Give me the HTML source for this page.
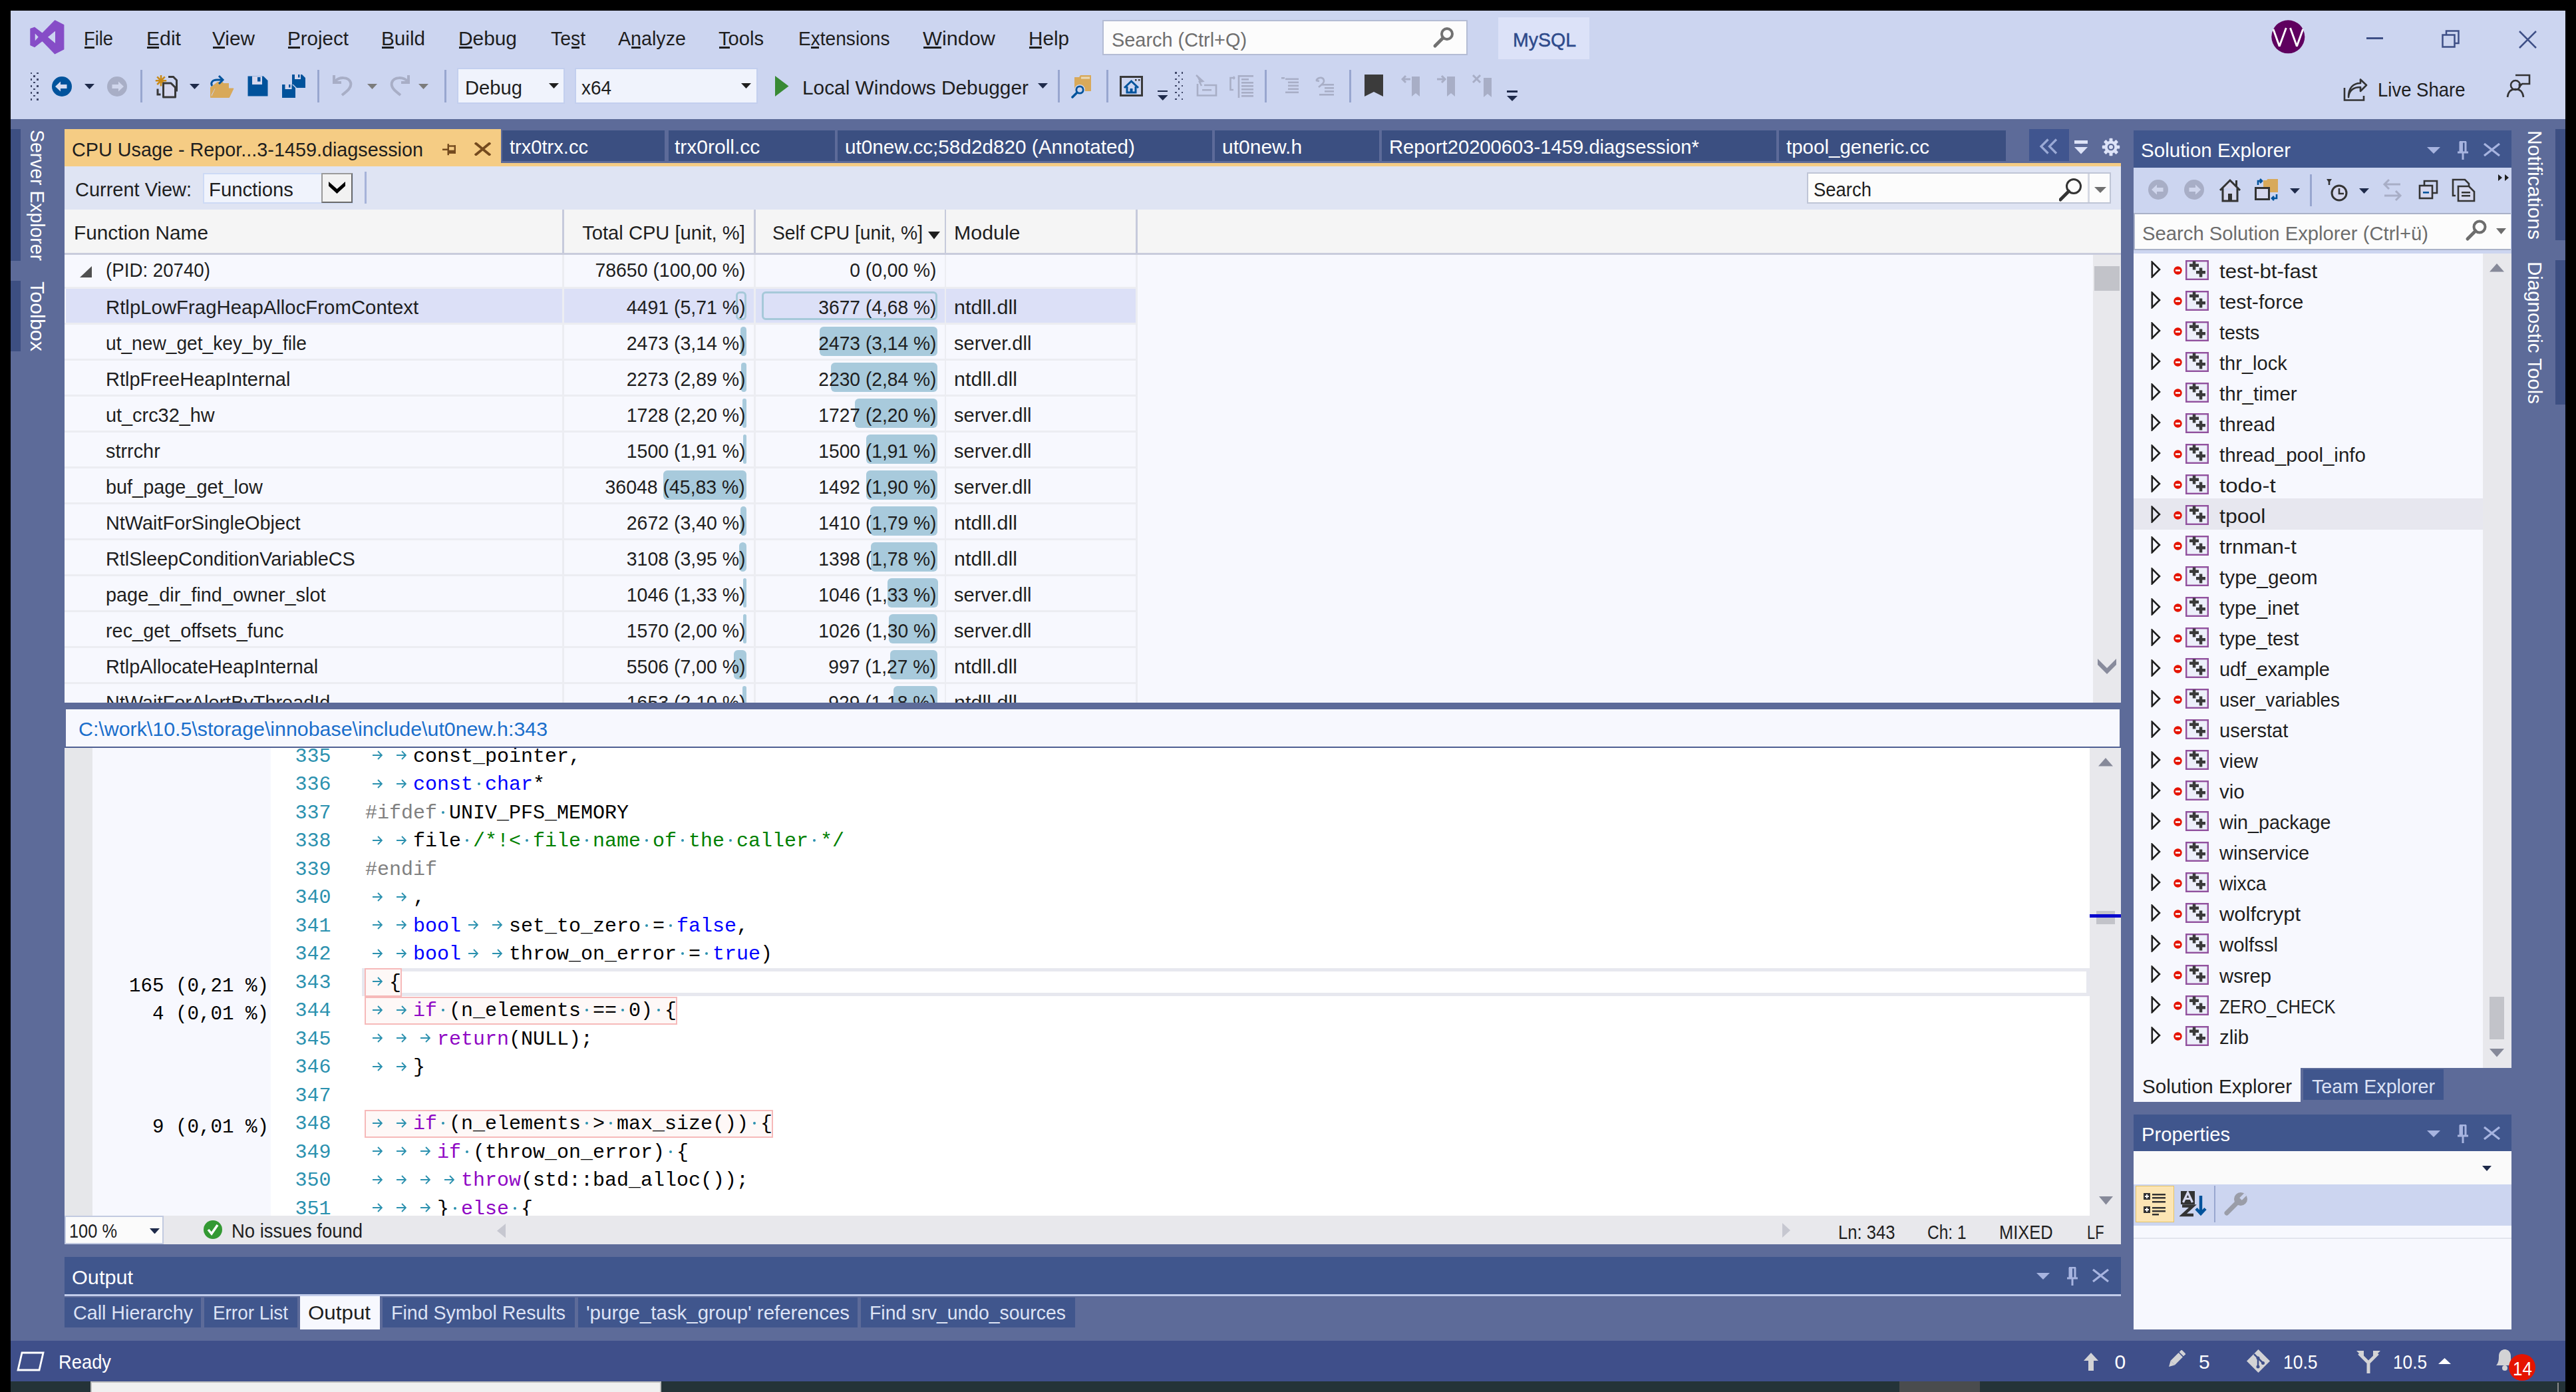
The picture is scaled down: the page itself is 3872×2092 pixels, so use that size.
<!DOCTYPE html>
<html><head><meta charset="utf-8"><style>
html,body{margin:0;padding:0;}
body{width:3872px;height:2092px;background:#000;position:relative;overflow:hidden;font-family:"Liberation Sans",sans-serif;}
div,svg{position:absolute;box-sizing:border-box;}
</style></head><body>
<div style="left:16px;top:16px;width:3840px;height:2060px;background:#5D6B99;"></div><div style="left:16px;top:16px;width:3840px;height:163px;background:#CCD5F0;"></div><svg style="left:36px;top:24px;" width="70" height="64" viewBox="0 0 70 64"><path d="M46.5 6.9 L59.8 13.5 L59.8 50 L46.5 56.8 L27.6 37.3 L15.9 46.5 L9.9 43.7 L9.9 19.3 L15.9 17.2 L27.6 26.2 Z M47.6 21.4 L35 31.7 L47.6 42.1 Z M16.1 24.8 L22.5 31.7 L16.1 38.9 Z" fill="#864DC7" stroke="#864DC7" stroke-width="1.2" stroke-linejoin="round" fill-rule="evenodd"/></svg><div style="left:126.00px;top:43px;font:30px/30px 'Liberation Sans',sans-serif;color:#1E1E1E;white-space:pre;transform:scaleX(0.9099);transform-origin:left top;">File</div><div style="left:127px;top:70px;width:14.6759px;height:2.5px;background:#1E1E1E;"></div><div style="left:220.00px;top:43px;font:30px/30px 'Liberation Sans',sans-serif;color:#1E1E1E;white-space:pre;transform:scaleX(1.0057);transform-origin:left top;">Edit</div><div style="left:221px;top:70px;width:18.1306px;height:2.5px;background:#1E1E1E;"></div><div style="left:319.00px;top:43px;font:30px/30px 'Liberation Sans',sans-serif;color:#1E1E1E;white-space:pre;transform:scaleX(0.9922);transform-origin:left top;">View</div><div style="left:320px;top:70px;width:17.8605px;height:2.5px;background:#1E1E1E;"></div><div style="left:432.00px;top:43px;font:30px/30px 'Liberation Sans',sans-serif;color:#1E1E1E;white-space:pre;transform:scaleX(0.9853);transform-origin:left top;">Project</div><div style="left:433px;top:70px;width:17.7209px;height:2.5px;background:#1E1E1E;"></div><div style="left:573.00px;top:43px;font:30px/30px 'Liberation Sans',sans-serif;color:#1E1E1E;white-space:pre;transform:scaleX(0.9890);transform-origin:left top;">Build</div><div style="left:574px;top:70px;width:17.7954px;height:2.5px;background:#1E1E1E;"></div><div style="left:689.00px;top:43px;font:30px/30px 'Liberation Sans',sans-serif;color:#1E1E1E;white-space:pre;transform:scaleX(0.9952);transform-origin:left top;">Debug</div><div style="left:690px;top:70px;width:19.5685px;height:2.5px;background:#1E1E1E;"></div><div style="left:828.00px;top:43px;font:30px/30px 'Liberation Sans',sans-serif;color:#1E1E1E;white-space:pre;transform:scaleX(0.9452);transform-origin:left top;">Test</div><div style="left:858.951px;top:70px;width:12.1778px;height:2.5px;background:#1E1E1E;"></div><div style="left:929.00px;top:43px;font:30px/30px 'Liberation Sans',sans-serif;color:#1E1E1E;white-space:pre;transform:scaleX(0.9555);transform-origin:left top;">Analyze</div><div style="left:949.125px;top:70px;width:13.945px;height:2.5px;background:#1E1E1E;"></div><div style="left:1080.00px;top:43px;font:30px/30px 'Liberation Sans',sans-serif;color:#1E1E1E;white-space:pre;transform:scaleX(0.9708);transform-origin:left top;">Tools</div><div style="left:1081px;top:70px;width:15.7925px;height:2.5px;background:#1E1E1E;"></div><div style="left:1199.50px;top:43px;font:30px/30px 'Liberation Sans',sans-serif;color:#1E1E1E;white-space:pre;transform:scaleX(0.9369);transform-origin:left top;">Extensions</div><div style="left:1219.25px;top:70px;width:12.053px;height:2.5px;background:#1E1E1E;"></div><div style="left:1387.00px;top:43px;font:30px/30px 'Liberation Sans',sans-serif;color:#1E1E1E;white-space:pre;transform:scaleX(1.0214);transform-origin:left top;">Window</div><div style="left:1388px;top:70px;width:26.9177px;height:2.5px;background:#1E1E1E;"></div><div style="left:1546.00px;top:43px;font:30px/30px 'Liberation Sans',sans-serif;color:#1E1E1E;white-space:pre;transform:scaleX(0.9884);transform-origin:left top;">Help</div><div style="left:1547px;top:70px;width:19.4195px;height:2.5px;background:#1E1E1E;"></div><div style="left:1657px;top:30px;width:549px;height:53px;background:#FCFCFC;border:2px solid #B4BCD4;"></div><div style="left:1671.00px;top:45px;font:30px/30px 'Liberation Sans',sans-serif;color:#6F6F6F;white-space:pre;transform:scaleX(0.9627);transform-origin:left top;">Search (Ctrl+Q)</div><svg style="left:2153px;top:38px;" width="36" height="36" viewBox="0 0 36 36"><circle cx="22" cy="13" r="8" fill="none" stroke="#717171" stroke-width="4"/><path d="M16 19 L4 31" stroke="#717171" stroke-width="5" stroke-linecap="round"/></svg><div style="left:2252px;top:26px;width:137px;height:63px;background:#DCE2F8;"></div><div style="left:2274.00px;top:45px;font:30px/30px 'Liberation Sans',sans-serif;color:#2E4A8B;white-space:pre;transform:scaleX(0.9499);transform-origin:left top;-webkit-text-stroke:0.5px #2E4A8B;">MySQL</div><svg style="left:3414px;top:30px;" width="51" height="51" viewBox="0 0 51 51"><circle cx="25.3" cy="25.3" r="25" fill="#5F005F"/><path d="M3.04 13.92 L12.2 39.6 L22.3 12 M28.5 12 L38.4 39.6 L47.56 13.92" fill="none" stroke="#fff" stroke-width="2.9" stroke-linejoin="bevel"/></svg><div style="left:3557px;top:56px;width:25px;height:3px;background:#3E4F86;"></div><svg style="left:3669px;top:44px;" width="30" height="30" viewBox="0 0 30 30"><rect x="2.5" y="8.5" width="18" height="18" fill="none" stroke="#3E4F86" stroke-width="2.5"/><path d="M8 8 V2.5 H26.5 V21 H21" fill="none" stroke="#3E4F86" stroke-width="2.5"/></svg><svg style="left:3786px;top:46px;" width="27" height="27" viewBox="0 0 27 27"><path d="M1 1 L26 26 M26 1 L1 26" stroke="#3E4F86" stroke-width="2.5"/></svg><div style="left:45.5px;top:108.5px;width:2.6px;height:2.6px;background:#3F4768;"></div><div style="left:55.2px;top:108.5px;width:2.6px;height:2.6px;background:#3F4768;"></div><div style="left:45.5px;top:118.4px;width:2.6px;height:2.6px;background:#3F4768;"></div><div style="left:55.2px;top:118.4px;width:2.6px;height:2.6px;background:#3F4768;"></div><div style="left:45.5px;top:128.3px;width:2.6px;height:2.6px;background:#3F4768;"></div><div style="left:55.2px;top:128.3px;width:2.6px;height:2.6px;background:#3F4768;"></div><div style="left:45.5px;top:138.2px;width:2.6px;height:2.6px;background:#3F4768;"></div><div style="left:55.2px;top:138.2px;width:2.6px;height:2.6px;background:#3F4768;"></div><div style="left:45.5px;top:148.1px;width:2.6px;height:2.6px;background:#3F4768;"></div><div style="left:55.2px;top:148.1px;width:2.6px;height:2.6px;background:#3F4768;"></div><div style="left:50.4px;top:113px;width:2.6px;height:2.6px;background:#3F4768;"></div><div style="left:50.4px;top:122.9px;width:2.6px;height:2.6px;background:#3F4768;"></div><div style="left:50.4px;top:132.8px;width:2.6px;height:2.6px;background:#3F4768;"></div><div style="left:50.4px;top:142.7px;width:2.6px;height:2.6px;background:#3F4768;"></div><svg style="left:78px;top:115px;" width="30" height="30" viewBox="0 0 30 30"><circle cx="15" cy="15" r="15" fill="#00539C"/><path d="M5 15 L13 7.5 V12 H22.5 V18 H13 V22.5 Z" fill="#D5DBF0"/></svg><svg style="left:127px;top:126px;" width="15" height="8" viewBox="0 0 15 8"><path d="M0 0 H15 L7.5 8 Z" fill="#1E2A4A"/></svg><svg style="left:161px;top:115px;" width="30" height="30" viewBox="0 0 30 30"><circle cx="15" cy="15" r="15" fill="#A8AEC6"/><path d="M25 15 L17 7.5 V12 H7.5 V18 H17 V22.5 Z" fill="#D0D6EC"/></svg><div style="left:211px;top:105px;width:2.5px;height:49px;background:#98A6CF;"></div><svg style="left:232px;top:112px;" width="36" height="36" viewBox="0 0 36 36"><g stroke="#C98A18" stroke-width="2.6"><path d="M10 1 V17.5 M1.8 9.2 H18.2 M4.2 3.4 L15.8 15 M15.8 3.4 L4.2 15"/></g><path d="M21 3.5 H28.5 L33.5 8.5 V25.5" fill="none" stroke="#383838" stroke-width="3"/><path d="M5 21.5 V30 H9.5" fill="none" stroke="#383838" stroke-width="3"/><path d="M13.5 13 H25 L31.5 19.5 V34 H13.5 Z" fill="#D6D8EE" stroke="#383838" stroke-width="3" stroke-linejoin="round"/></svg><svg style="left:285px;top:126px;" width="15" height="8" viewBox="0 0 15 8"><path d="M0 0 H15 L7.5 8 Z" fill="#1E2A4A"/></svg><svg style="left:315px;top:112px;" width="38" height="38" viewBox="0 0 38 38"><path d="M1.5 19 V34.5 H29.5 L36 21 H9 L3 34" fill="#D8A95A" stroke="#D8A95A" stroke-width="1"/><path d="M1.5 19 V33 L8 21 H29 V13 H21 L19.5 11 H12" fill="#D8A95A"/><path d="M4 17 C1 13 4 8 11 8 H19" fill="none" stroke="#00539C" stroke-width="3"/><path d="M14 2 L20 8 L14 14" fill="none" stroke="#00539C" stroke-width="3"/></svg><svg style="left:372px;top:114px;" width="31" height="31" viewBox="0 0 31 31"><path d="M0.5 0.5 H24 L30.5 7 V30.5 H0.5 Z" fill="#00529B"/><rect x="7" y="0.5" width="15" height="12.5" fill="#D6D8EE"/><rect x="15" y="2" width="4.5" height="6.5" fill="#00529B"/></svg><svg style="left:424px;top:112px;" width="36" height="36" viewBox="0 0 36 36"><path d="M15 0 H30 L35 5 V20 H22 L17 15 H15 Z" fill="#00529B"/><rect x="19" y="0" width="9" height="7" fill="#D6D8EE"/><rect x="24" y="0" width="2.5" height="4.5" fill="#00529B"/><path d="M0 15 H15 L20 20 V35 H0 Z" fill="#00529B"/><rect x="4.5" y="15" width="10" height="7" fill="#D6D8EE"/><rect x="10" y="15" width="2.5" height="4.5" fill="#00529B"/></svg><div style="left:477px;top:105px;width:2.5px;height:49px;background:#98A6CF;"></div><svg style="left:499px;top:111px;" width="32" height="36" viewBox="0 0 32 36"><path d="M3 2 V13 H14" fill="none" stroke="#A8AEC6" stroke-width="4"/><path d="M4 12 C10 4 25 4 28 13 C30 20 24 25 15 32" fill="none" stroke="#A8AEC6" stroke-width="4"/></svg><svg style="left:552px;top:126px;" width="15" height="8" viewBox="0 0 15 8"><path d="M0 0 H15 L7.5 8 Z" fill="#7B7B7B"/></svg><svg style="left:585px;top:111px;" width="32" height="36" viewBox="0 0 32 36"><path d="M29 2 V13 H18" fill="none" stroke="#A8AEC6" stroke-width="4"/><path d="M28 12 C22 4 7 4 4 13 C2 20 8 25 17 32" fill="none" stroke="#A8AEC6" stroke-width="4"/></svg><svg style="left:629px;top:126px;" width="15" height="8" viewBox="0 0 15 8"><path d="M0 0 H15 L7.5 8 Z" fill="#7B7B7B"/></svg><div style="left:668px;top:105px;width:2.5px;height:49px;background:#98A6CF;"></div><div style="left:687px;top:102px;width:162px;height:54px;background:#F0F3FC;border:2px solid #C3CFEE;"></div><div style="left:698.50px;top:117px;font:30px/30px 'Liberation Sans',sans-serif;color:#1E1E1E;white-space:pre;transform:scaleX(0.9726);transform-origin:left top;">Debug</div><svg style="left:825px;top:125px;" width="15" height="8" viewBox="0 0 15 8"><path d="M0 0 H15 L7.5 8 Z" fill="#1E1E1E"/></svg><div style="left:864px;top:102px;width:275px;height:54px;background:#F0F3FC;border:2px solid #C3CFEE;"></div><div style="left:874.00px;top:117px;font:30px/30px 'Liberation Sans',sans-serif;color:#1E1E1E;white-space:pre;transform:scaleX(0.9302);transform-origin:left top;">x64</div><svg style="left:1114px;top:125px;" width="15" height="8" viewBox="0 0 15 8"><path d="M0 0 H15 L7.5 8 Z" fill="#1E1E1E"/></svg><svg style="left:1165px;top:114px;" width="21" height="31" viewBox="0 0 21 31"><path d="M0 0 L20.5 15.5 L0 31 Z" fill="#388A34"/></svg><div style="left:1206.00px;top:117px;font:30px/30px 'Liberation Sans',sans-serif;color:#1E1E1E;white-space:pre;transform:scaleX(0.9945);transform-origin:left top;">Local Windows Debugger</div><svg style="left:1560px;top:125px;" width="15" height="8" viewBox="0 0 15 8"><path d="M0 0 H15 L7.5 8 Z" fill="#1E2A4A"/></svg><div style="left:1590px;top:105px;width:2.5px;height:49px;background:#98A6CF;"></div><svg style="left:1610px;top:110px;" width="40" height="38" viewBox="0 0 40 38"><path d="M5 6 H12 L14 3 H30 V27 H5 Z" fill="#D8A95A"/><rect x="15" y="5.5" width="13" height="3" fill="#E9D9B8"/><circle cx="13" cy="25" r="7" fill="#CBD3EC" stroke="#CCD5F0" stroke-width="2"/><circle cx="13" cy="25" r="5.2" fill="#CBD3EC" stroke="#00539C" stroke-width="2.8"/><path d="M9 29 L2 36" stroke="#00539C" stroke-width="3.5" stroke-linecap="round"/></svg><div style="left:1663px;top:105px;width:2.5px;height:49px;background:#98A6CF;"></div><svg style="left:1683px;top:114px;" width="36" height="32" viewBox="0 0 36 32"><rect x="1.5" y="1.5" width="32" height="28" fill="none" stroke="#3A3A3A" stroke-width="3"/><rect x="23" y="5" width="2.5" height="2.5" fill="#3A3A3A"/><rect x="28" y="5" width="2.5" height="2.5" fill="#3A3A3A"/><path d="M7 18 L17.5 8 L28 18" fill="none" stroke="#00539C" stroke-width="3"/><path d="M11 16 V25 H24 V16" fill="none" stroke="#00539C" stroke-width="3"/><rect x="15.5" y="19" width="4" height="6" fill="#00539C"/></svg><div style="left:1739.5px;top:135.5px;width:15.5px;height:2.5px;background:#1E2A4A;"></div><svg style="left:1739.5px;top:143px;" width="15.5" height="8" viewBox="0 0 15.5 8"><path d="M0 0 H15.5 L7.75 8 Z" fill="#1E2A4A"/></svg><div style="left:1766px;top:108px;width:2.6px;height:2.6px;background:#3F4768;"></div><div style="left:1775.7px;top:108px;width:2.6px;height:2.6px;background:#3F4768;"></div><div style="left:1766px;top:117.9px;width:2.6px;height:2.6px;background:#3F4768;"></div><div style="left:1775.7px;top:117.9px;width:2.6px;height:2.6px;background:#3F4768;"></div><div style="left:1766px;top:127.8px;width:2.6px;height:2.6px;background:#3F4768;"></div><div style="left:1775.7px;top:127.8px;width:2.6px;height:2.6px;background:#3F4768;"></div><div style="left:1766px;top:137.7px;width:2.6px;height:2.6px;background:#3F4768;"></div><div style="left:1775.7px;top:137.7px;width:2.6px;height:2.6px;background:#3F4768;"></div><div style="left:1766px;top:147.6px;width:2.6px;height:2.6px;background:#3F4768;"></div><div style="left:1775.7px;top:147.6px;width:2.6px;height:2.6px;background:#3F4768;"></div><div style="left:1770.9px;top:112.5px;width:2.6px;height:2.6px;background:#3F4768;"></div><div style="left:1770.9px;top:122.4px;width:2.6px;height:2.6px;background:#3F4768;"></div><div style="left:1770.9px;top:132.3px;width:2.6px;height:2.6px;background:#3F4768;"></div><div style="left:1770.9px;top:142.2px;width:2.6px;height:2.6px;background:#3F4768;"></div><svg style="left:1796px;top:112px;" width="36" height="34" viewBox="0 0 36 34"><path d="M2 1 L12 10 L7 11 L10 17" fill="#A8AEC6" stroke="#A8AEC6" stroke-width="2.5"/><path d="M4 14 V31.5 H32 V16 H14" fill="none" stroke="#A8AEC6" stroke-width="2.6"/><rect x="11" y="22" width="14" height="2.5" fill="#A8AEC6"/></svg><svg style="left:1848px;top:112px;" width="38" height="36" viewBox="0 0 38 36"><path d="M6 5 H1.5 V23 H6" fill="none" stroke="#A8AEC6" stroke-width="2.6"/><path d="M8 5 L6 3 M8 5 L6 7" stroke="#A8AEC6" stroke-width="2"/><path d="M14 1 V35" stroke="#A8AEC6" stroke-width="2.6"/><g fill="#A8AEC6"><rect x="14" y="1" width="22" height="2.6"/><rect x="18" y="6" width="11" height="2.6"/><rect x="18" y="11" width="18" height="2.6"/><rect x="18" y="16" width="18" height="2.6"/><rect x="18" y="21" width="18" height="2.6"/><rect x="18" y="26" width="18" height="2.6"/><rect x="18" y="31" width="18" height="2.6"/></g></svg><div style="left:1901px;top:105px;width:2.5px;height:49px;background:#98A6CF;"></div><svg style="left:1926px;top:116px;" width="26" height="26" viewBox="0 0 26 26"><g fill="#A8AEC6"><rect x="0" y="0" width="5" height="2.6"/><rect x="6" y="1.5" width="20" height="2.6"/><rect x="10" y="6.5" width="16" height="2.6"/><rect x="10" y="11.5" width="16" height="2.6"/><rect x="10" y="16.5" width="16" height="2.6"/><rect x="6" y="21.5" width="20" height="2.6"/></g></svg><svg style="left:1975px;top:114px;" width="32" height="32" viewBox="0 0 32 32"><path d="M3 7 L7 3 M3 7 L8 8" stroke="#A8AEC6" stroke-width="2.4" fill="none"/><path d="M4 6 C8 1 15 2 15 8 C15 11 12 13 7 17" fill="none" stroke="#A8AEC6" stroke-width="2.6"/><g fill="#A8AEC6"><rect x="12" y="12" width="18" height="2.6"/><rect x="16" y="17" width="14" height="2.6"/><rect x="16" y="22" width="14" height="2.6"/><rect x="8" y="27" width="22" height="2.6"/></g></svg><div style="left:2028px;top:105px;width:2.5px;height:49px;background:#98A6CF;"></div><svg style="left:2051px;top:112px;" width="28" height="33" viewBox="0 0 28 33"><path d="M0 0 H28 V33 L14 26 L0 33 Z" fill="#3B3B3B"/></svg><svg style="left:2106px;top:112px;" width="30" height="34" viewBox="0 0 30 34"><path d="M16 3 H28 V33 L22 28 L16 33 Z" fill="#A8AEC6"/><path d="M2 7 H14 M7 2 L2 7 L7 12" fill="none" stroke="#A8AEC6" stroke-width="3"/></svg><svg style="left:2159px;top:112px;" width="31" height="34" viewBox="0 0 31 34"><path d="M16 3 H28 V33 L22 28 L16 33 Z" fill="#A8AEC6"/><path d="M1 7 H13 M8 2 L13 7 L8 12" fill="none" stroke="#A8AEC6" stroke-width="3"/></svg><svg style="left:2212px;top:112px;" width="32" height="34" viewBox="0 0 32 34"><path d="M18 5 H30 V34 L24 29 L18 34 Z" fill="#A8AEC6"/><path d="M2 1 L13 12 M13 1 L2 12" fill="none" stroke="#A8AEC6" stroke-width="3"/></svg><div style="left:2265px;top:136px;width:16px;height:2.5px;background:#1E2A4A;"></div><svg style="left:2265px;top:143.5px;" width="16" height="8" viewBox="0 0 16 8"><path d="M0 0 H16 L8.0 8 Z" fill="#1E2A4A"/></svg><svg style="left:3522px;top:118px;" width="38" height="36" viewBox="0 0 38 36"><path d="M2 14 V32.5 H31 V26" fill="none" stroke="#333" stroke-width="2.6"/><path d="M8 28 C9 18 15 13 26 13 V19 L35 10 L26 1.5 V7 C15 7 8 14 8 28 Z" fill="none" stroke="#333" stroke-width="2.6" stroke-linejoin="round"/></svg><div style="left:3574.00px;top:120px;font:30px/30px 'Liberation Sans',sans-serif;color:#1E1E1E;white-space:pre;transform:scaleX(0.9168);transform-origin:left top;">Live Share</div><svg style="left:3767px;top:111px;" width="40" height="40" viewBox="0 0 40 40"><circle cx="14" cy="17" r="7" fill="none" stroke="#333" stroke-width="2.6"/><path d="M2 35 C3 26 8 23 14 23 C20 23 25 26 26 35" fill="none" stroke="#333" stroke-width="2.6"/><path d="M14 2 H35 V15 H24 L20 19 V15" fill="none" stroke="#333" stroke-width="2.6"/></svg><div style="left:16px;top:194px;width:15px;height:198px;background:#3D4F82;"></div><div style="left:16px;top:422px;width:15px;height:106px;background:#3D4F82;"></div><div style="left:41px;top:195px;width:208.4px;height:30px;font:30px/30px 'Liberation Sans',sans-serif;color:#FFFFFF;white-space:pre;transform-origin:0 0;transform:translate(30px,0) rotate(90deg) scaleX(0.9453);">Server Explorer</div><div style="left:41px;top:422.5px;width:103.4px;height:30px;font:30px/30px 'Liberation Sans',sans-serif;color:#FFFFFF;white-space:pre;transform-origin:0 0;transform:translate(30px,0) rotate(90deg) scaleX(1.0153);">Toolbox</div><div style="left:97px;top:194px;width:656px;height:56px;background:#F5CC84;"></div><div style="left:108.00px;top:210px;font:30px/30px 'Liberation Sans',sans-serif;color:#1E1E1E;white-space:pre;transform:scaleX(0.9594);transform-origin:left top;">CPU Usage - Repor...3-1459.diagsession</div><svg style="left:664px;top:215px;" width="22" height="20" viewBox="0 0 22 20"><g fill="#744A1E"><rect x="1" y="8.5" width="8" height="2.5"/><rect x="8.5" y="1.2" width="2.5" height="17"/><rect x="11" y="3.3" width="10" height="2.4"/><rect x="18.6" y="3.3" width="2.4" height="12.6"/><rect x="11" y="10.7" width="10" height="5.2"/></g></svg><svg style="left:713px;top:214px;" width="25" height="20" viewBox="0 0 25 20"><path d="M1 0.5 L24 19.5 M24 0.5 L1 19.5" stroke="#744A1E" stroke-width="3.8"/></svg><div style="left:753px;top:245px;width:2435px;height:5px;background:#F5CC84;"></div><div style="left:755px;top:196px;width:244px;height:46px;background:#3B4F81;"></div><div style="left:765.60px;top:206px;font:30px/30px 'Liberation Sans',sans-serif;color:#FFFFFF;white-space:pre;transform:scaleX(0.9701);transform-origin:left top;">trx0trx.cc</div><div style="left:1005px;top:196px;width:249.5px;height:46px;background:#3B4F81;"></div><div style="left:1014.00px;top:206px;font:30px/30px 'Liberation Sans',sans-serif;color:#FFFFFF;white-space:pre;">trx0roll.cc</div><div style="left:1259px;top:196px;width:563px;height:46px;background:#3B4F81;"></div><div style="left:1270.00px;top:206px;font:30px/30px 'Liberation Sans',sans-serif;color:#FFFFFF;white-space:pre;transform:scaleX(0.9901);transform-origin:left top;">ut0new.cc;58d2d820 (Annotated)</div><div style="left:1826px;top:196px;width:247px;height:46px;background:#3B4F81;"></div><div style="left:1837.00px;top:206px;font:30px/30px 'Liberation Sans',sans-serif;color:#FFFFFF;white-space:pre;">ut0new.h</div><div style="left:2077px;top:196px;width:593px;height:46px;background:#3B4F81;"></div><div style="left:2088.00px;top:206px;font:30px/30px 'Liberation Sans',sans-serif;color:#FFFFFF;white-space:pre;transform:scaleX(0.9734);transform-origin:left top;">Report20200603-1459.diagsession*</div><div style="left:2674px;top:196px;width:341px;height:46px;background:#3B4F81;"></div><div style="left:2684.50px;top:206px;font:30px/30px 'Liberation Sans',sans-serif;color:#FFFFFF;white-space:pre;transform:scaleX(0.9841);transform-origin:left top;">tpool_generic.cc</div><div style="left:3050px;top:194px;width:60px;height:48px;background:#40558F;"></div><svg style="left:3064px;top:207px;" width="32" height="26" viewBox="0 0 32 26"><path d="M14.5 2.5 L4 13 L14.5 23.5 M27 2.5 L16.5 13 L27 23.5" fill="none" stroke="#9AA9D5" stroke-width="3.3"/></svg><svg style="left:3118px;top:211px;" width="20" height="21" viewBox="0 0 20 21"><rect x="0" y="0" width="20" height="5" fill="#DDE3F8"/><path d="M0 10 H20 L10 20.5 Z" fill="#DDE3F8"/></svg><svg style="left:3158px;top:206px;" width="30" height="30" viewBox="0 0 30 30"><g fill="#DDE3F8"><rect x="12.5" y="1.8" width="5" height="6" rx="1" transform="rotate(0 15 15)"/><rect x="12.5" y="1.8" width="5" height="6" rx="1" transform="rotate(45 15 15)"/><rect x="12.5" y="1.8" width="5" height="6" rx="1" transform="rotate(90 15 15)"/><rect x="12.5" y="1.8" width="5" height="6" rx="1" transform="rotate(135 15 15)"/><rect x="12.5" y="1.8" width="5" height="6" rx="1" transform="rotate(180 15 15)"/><rect x="12.5" y="1.8" width="5" height="6" rx="1" transform="rotate(225 15 15)"/><rect x="12.5" y="1.8" width="5" height="6" rx="1" transform="rotate(270 15 15)"/><rect x="12.5" y="1.8" width="5" height="6" rx="1" transform="rotate(315 15 15)"/><circle cx="15" cy="15" r="9.5"/></g><circle cx="15" cy="15" r="5.3" fill="#5D6B99"/><circle cx="15" cy="15" r="3" fill="#DDE3F8"/></svg><div style="left:97px;top:250px;width:3091px;height:65px;background:#DFE4F3;"></div><div style="left:113.00px;top:270px;font:30px/30px 'Liberation Sans',sans-serif;color:#1E1E1E;white-space:pre;transform:scaleX(0.9659);transform-origin:left top;">Current View:</div><div style="left:305px;top:260px;width:226px;height:46px;background:#F0F3FC;border:2px solid #CDDAF5;"></div><div style="left:314.00px;top:270px;font:30px/30px 'Liberation Sans',sans-serif;color:#1E1E1E;white-space:pre;transform:scaleX(0.9763);transform-origin:left top;">Functions</div><div style="left:483px;top:260px;width:47px;height:45px;background:#F2F2F2;border:2.5px solid #6A6A6A;border-top-color:#9A9A9A;border-left-color:#9A9A9A;"></div><svg style="left:493px;top:272px;" width="27" height="20" viewBox="0 0 27 20"><path d="M1 1 L13.5 12 L26 1 V7.5 L13.5 19 L1 7.5 Z" fill="#000"/></svg><div style="left:548px;top:258px;width:2.5px;height:48px;background:#A6B3D9;"></div><div style="left:2716px;top:259px;width:457px;height:47px;background:#FCFCFC;border:2.5px solid #BFC5D6;"></div><div style="left:3138px;top:261px;width:2.5px;height:43px;background:#D5D9E3;"></div><div style="left:2726.00px;top:270px;font:30px/30px 'Liberation Sans',sans-serif;color:#1E1E1E;white-space:pre;transform:scaleX(0.9152);transform-origin:left top;">Search</div><svg style="left:3095px;top:266px;" width="37" height="37" viewBox="0 0 37 37"><circle cx="22" cy="14" r="10.5" fill="none" stroke="#333" stroke-width="3"/><path d="M14.5 21.5 L2 34" stroke="#333" stroke-width="5" stroke-linecap="round"/></svg><svg style="left:3148px;top:281px;" width="18" height="9" viewBox="0 0 18 9"><path d="M0 0 H18 L9.0 9 Z" fill="#707070"/></svg><div style="left:97px;top:315px;width:3091px;height:65px;background:#F5F5F5;"></div><div style="left:97px;top:380px;width:3091px;height:2.5px;background:#C9CCDC;"></div><div style="left:845px;top:315px;width:2.5px;height:65px;background:#C6CADB;"></div><div style="left:1133px;top:315px;width:2.5px;height:65px;background:#C6CADB;"></div><div style="left:1419.5px;top:315px;width:2.5px;height:65px;background:#C6CADB;"></div><div style="left:1707px;top:315px;width:2.5px;height:65px;background:#C6CADB;"></div><div style="left:110.50px;top:335px;font:30px/30px 'Liberation Sans',sans-serif;color:#1E1E1E;white-space:pre;transform:scaleX(0.9929);transform-origin:left top;">Function Name</div><div style="left:868.25px;top:335px;font:30px/30px 'Liberation Sans',sans-serif;color:#1E1E1E;white-space:pre;transform:scaleX(0.9712);transform-origin:right top;">Total CPU [unit, %]</div><div style="left:1161.00px;top:335px;font:30px/30px 'Liberation Sans',sans-serif;color:#1E1E1E;white-space:pre;transform:scaleX(0.9414);transform-origin:left top;">Self CPU [unit, %]</div><svg style="left:1394.5px;top:347.5px;" width="18" height="12" viewBox="0 0 18 12"><path d="M0 0 H18 L9 11.5 Z" fill="#1E1E1E"/></svg><div style="left:1433.50px;top:335px;font:30px/30px 'Liberation Sans',sans-serif;color:#1E1E1E;white-space:pre;transform:scaleX(1.0111);transform-origin:left top;">Module</div><div style="left:97px;top:382.5px;width:3049px;height:673.5px;background:#F7F8FE;"></div><div style="left:97px;top:382.5px;width:3049px;height:673.5px;overflow:hidden;"><div style="left:0px;top:48.25px;width:1612.5px;height:3px;background:#ECEDF2;"></div><div style="left:748px;top:0px;width:2.5px;height:48.25px;background:#ECEDF2;"></div><div style="left:1036px;top:0px;width:2.5px;height:48.25px;background:#ECEDF2;"></div><div style="left:1322.5px;top:0px;width:2.5px;height:48.25px;background:#ECEDF2;"></div><div style="left:1610px;top:0px;width:2.5px;height:48.25px;background:#ECEDF2;"></div><div style="left:62.00px;top:8px;font:30px/30px 'Liberation Sans',sans-serif;color:#1E1E1E;white-space:pre;transform:scaleX(0.9230);transform-origin:left top;">(PID: 20740)</div><div style="left:784.50px;top:8px;font:30px/30px 'Liberation Sans',sans-serif;color:#1E1E1E;white-space:pre;transform:scaleX(0.9480);transform-origin:right top;">78650 (100,00 %)</div><div style="left:1171.62px;top:8px;font:30px/30px 'Liberation Sans',sans-serif;color:#1E1E1E;white-space:pre;transform:scaleX(0.9400);transform-origin:right top;">0 (0,00 %)</div><div style="left:0px;top:102.25px;width:1612.5px;height:3px;background:#ECEDF2;"></div><div style="left:2px;top:51.25px;width:1608px;height:51px;background:#DCE0F7;"></div><div style="left:748px;top:51.25px;width:2.5px;height:51px;background:#ECEDF2;"></div><div style="left:1036px;top:51.25px;width:2.5px;height:51px;background:#ECEDF2;"></div><div style="left:1322.5px;top:51.25px;width:2.5px;height:51px;background:#ECEDF2;"></div><div style="left:1610px;top:51.25px;width:2.5px;height:51px;background:#ECEDF2;"></div><div style="left:1009.47px;top:55.25px;width:15.5312px;height:43px;background:transparent;border:3px solid #A6C9D9;border-radius:6px;"></div><div style="left:1048.08px;top:55.25px;width:264.42px;height:43px;background:transparent;border:3px solid #A6C9D9;border-radius:6px;"></div><div style="left:62.00px;top:64px;font:30px/30px 'Liberation Sans',sans-serif;color:#1E1E1E;white-space:pre;transform:scaleX(0.9790);transform-origin:left top;">RtlpLowFragHeapAllocFromContext</div><div style="left:834.56px;top:64px;font:30px/30px 'Liberation Sans',sans-serif;color:#1E1E1E;white-space:pre;transform:scaleX(0.9480);transform-origin:right top;">4491 (5,71 %)</div><div style="left:1121.56px;top:64px;font:30px/30px 'Liberation Sans',sans-serif;color:#1E1E1E;white-space:pre;transform:scaleX(0.9400);transform-origin:right top;">3677 (4,68 %)</div><div style="left:1336.50px;top:64px;font:30px/30px 'Liberation Sans',sans-serif;color:#1E1E1E;white-space:pre;transform:scaleX(1.0170);transform-origin:left top;">ntdll.dll</div><div style="left:0px;top:156.25px;width:1612.5px;height:3px;background:#ECEDF2;"></div><div style="left:748px;top:105.25px;width:2.5px;height:51px;background:#ECEDF2;"></div><div style="left:1036px;top:105.25px;width:2.5px;height:51px;background:#ECEDF2;"></div><div style="left:1322.5px;top:105.25px;width:2.5px;height:51px;background:#ECEDF2;"></div><div style="left:1610px;top:105.25px;width:2.5px;height:51px;background:#ECEDF2;"></div><div style="left:1016.46px;top:108.75px;width:8.5408px;height:44px;background:#A8CADC;border-radius:6px;"></div><div style="left:1135.09px;top:108.75px;width:177.41px;height:44px;background:#A8CADC;border-radius:6px;"></div><div style="left:62.00px;top:118px;font:30px/30px 'Liberation Sans',sans-serif;color:#1E1E1E;white-space:pre;transform:scaleX(0.9380);transform-origin:left top;">ut_new_get_key_by_file</div><div style="left:834.56px;top:118px;font:30px/30px 'Liberation Sans',sans-serif;color:#1E1E1E;white-space:pre;transform:scaleX(0.9480);transform-origin:right top;">2473 (3,14 %)</div><div style="left:1121.56px;top:118px;font:30px/30px 'Liberation Sans',sans-serif;color:#1E1E1E;white-space:pre;transform:scaleX(0.9400);transform-origin:right top;">2473 (3,14 %)</div><div style="left:1336.50px;top:118px;font:30px/30px 'Liberation Sans',sans-serif;color:#1E1E1E;white-space:pre;transform:scaleX(0.9700);transform-origin:left top;">server.dll</div><div style="left:0px;top:210.25px;width:1612.5px;height:3px;background:#ECEDF2;"></div><div style="left:748px;top:159.25px;width:2.5px;height:51px;background:#ECEDF2;"></div><div style="left:1036px;top:159.25px;width:2.5px;height:51px;background:#ECEDF2;"></div><div style="left:1322.5px;top:159.25px;width:2.5px;height:51px;background:#ECEDF2;"></div><div style="left:1610px;top:159.25px;width:2.5px;height:51px;background:#ECEDF2;"></div><div style="left:1017.14px;top:162.75px;width:7.8608px;height:44px;background:#A8CADC;border-radius:6px;"></div><div style="left:1152.04px;top:162.75px;width:160.46px;height:44px;background:#A8CADC;border-radius:6px;"></div><div style="left:62.00px;top:172px;font:30px/30px 'Liberation Sans',sans-serif;color:#1E1E1E;white-space:pre;transform:scaleX(0.9670);transform-origin:left top;">RtlpFreeHeapInternal</div><div style="left:834.56px;top:172px;font:30px/30px 'Liberation Sans',sans-serif;color:#1E1E1E;white-space:pre;transform:scaleX(0.9480);transform-origin:right top;">2273 (2,89 %)</div><div style="left:1121.56px;top:172px;font:30px/30px 'Liberation Sans',sans-serif;color:#1E1E1E;white-space:pre;transform:scaleX(0.9400);transform-origin:right top;">2230 (2,84 %)</div><div style="left:1336.50px;top:172px;font:30px/30px 'Liberation Sans',sans-serif;color:#1E1E1E;white-space:pre;transform:scaleX(1.0170);transform-origin:left top;">ntdll.dll</div><div style="left:0px;top:264.25px;width:1612.5px;height:3px;background:#ECEDF2;"></div><div style="left:748px;top:213.25px;width:2.5px;height:51px;background:#ECEDF2;"></div><div style="left:1036px;top:213.25px;width:2.5px;height:51px;background:#ECEDF2;"></div><div style="left:1322.5px;top:213.25px;width:2.5px;height:51px;background:#ECEDF2;"></div><div style="left:1610px;top:213.25px;width:2.5px;height:51px;background:#ECEDF2;"></div><div style="left:1019.02px;top:216.75px;width:5.984px;height:44px;background:#A8CADC;border-radius:6px;"></div><div style="left:1188.2px;top:216.75px;width:124.3px;height:44px;background:#A8CADC;border-radius:6px;"></div><div style="left:62.00px;top:226px;font:30px/30px 'Liberation Sans',sans-serif;color:#1E1E1E;white-space:pre;transform:scaleX(0.9620);transform-origin:left top;">ut_crc32_hw</div><div style="left:834.56px;top:226px;font:30px/30px 'Liberation Sans',sans-serif;color:#1E1E1E;white-space:pre;transform:scaleX(0.9480);transform-origin:right top;">1728 (2,20 %)</div><div style="left:1121.56px;top:226px;font:30px/30px 'Liberation Sans',sans-serif;color:#1E1E1E;white-space:pre;transform:scaleX(0.9400);transform-origin:right top;">1727 (2,20 %)</div><div style="left:1336.50px;top:226px;font:30px/30px 'Liberation Sans',sans-serif;color:#1E1E1E;white-space:pre;transform:scaleX(0.9700);transform-origin:left top;">server.dll</div><div style="left:0px;top:318.25px;width:1612.5px;height:3px;background:#ECEDF2;"></div><div style="left:748px;top:267.25px;width:2.5px;height:51px;background:#ECEDF2;"></div><div style="left:1036px;top:267.25px;width:2.5px;height:51px;background:#ECEDF2;"></div><div style="left:1322.5px;top:267.25px;width:2.5px;height:51px;background:#ECEDF2;"></div><div style="left:1610px;top:267.25px;width:2.5px;height:51px;background:#ECEDF2;"></div><div style="left:1019.5px;top:270.75px;width:5.5px;height:44px;background:#A8CADC;border-radius:6px;"></div><div style="left:1204.59px;top:270.75px;width:107.915px;height:44px;background:#A8CADC;border-radius:6px;"></div><div style="left:62.00px;top:280px;font:30px/30px 'Liberation Sans',sans-serif;color:#1E1E1E;white-space:pre;transform:scaleX(0.9620);transform-origin:left top;">strrchr</div><div style="left:834.56px;top:280px;font:30px/30px 'Liberation Sans',sans-serif;color:#1E1E1E;white-space:pre;transform:scaleX(0.9480);transform-origin:right top;">1500 (1,91 %)</div><div style="left:1121.56px;top:280px;font:30px/30px 'Liberation Sans',sans-serif;color:#1E1E1E;white-space:pre;transform:scaleX(0.9400);transform-origin:right top;">1500 (1,91 %)</div><div style="left:1336.50px;top:280px;font:30px/30px 'Liberation Sans',sans-serif;color:#1E1E1E;white-space:pre;transform:scaleX(0.9700);transform-origin:left top;">server.dll</div><div style="left:0px;top:372.25px;width:1612.5px;height:3px;background:#ECEDF2;"></div><div style="left:748px;top:321.25px;width:2.5px;height:51px;background:#ECEDF2;"></div><div style="left:1036px;top:321.25px;width:2.5px;height:51px;background:#ECEDF2;"></div><div style="left:1322.5px;top:321.25px;width:2.5px;height:51px;background:#ECEDF2;"></div><div style="left:1610px;top:321.25px;width:2.5px;height:51px;background:#ECEDF2;"></div><div style="left:900.342px;top:324.75px;width:124.658px;height:44px;background:#A8CADC;border-radius:6px;"></div><div style="left:1205.15px;top:324.75px;width:107.35px;height:44px;background:#A8CADC;border-radius:6px;"></div><div style="left:62.00px;top:334px;font:30px/30px 'Liberation Sans',sans-serif;color:#1E1E1E;white-space:pre;transform:scaleX(0.9620);transform-origin:left top;">buf_page_get_low</div><div style="left:801.19px;top:334px;font:30px/30px 'Liberation Sans',sans-serif;color:#1E1E1E;white-space:pre;transform:scaleX(0.9480);transform-origin:right top;">36048 (45,83 %)</div><div style="left:1121.56px;top:334px;font:30px/30px 'Liberation Sans',sans-serif;color:#1E1E1E;white-space:pre;transform:scaleX(0.9400);transform-origin:right top;">1492 (1,90 %)</div><div style="left:1336.50px;top:334px;font:30px/30px 'Liberation Sans',sans-serif;color:#1E1E1E;white-space:pre;transform:scaleX(0.9700);transform-origin:left top;">server.dll</div><div style="left:0px;top:426.25px;width:1612.5px;height:3px;background:#ECEDF2;"></div><div style="left:748px;top:375.25px;width:2.5px;height:51px;background:#ECEDF2;"></div><div style="left:1036px;top:375.25px;width:2.5px;height:51px;background:#ECEDF2;"></div><div style="left:1322.5px;top:375.25px;width:2.5px;height:51px;background:#ECEDF2;"></div><div style="left:1610px;top:375.25px;width:2.5px;height:51px;background:#ECEDF2;"></div><div style="left:1015.75px;top:378.75px;width:9.248px;height:44px;background:#A8CADC;border-radius:6px;"></div><div style="left:1211.37px;top:378.75px;width:101.135px;height:44px;background:#A8CADC;border-radius:6px;"></div><div style="left:62.00px;top:388px;font:30px/30px 'Liberation Sans',sans-serif;color:#1E1E1E;white-space:pre;transform:scaleX(0.9620);transform-origin:left top;">NtWaitForSingleObject</div><div style="left:834.56px;top:388px;font:30px/30px 'Liberation Sans',sans-serif;color:#1E1E1E;white-space:pre;transform:scaleX(0.9480);transform-origin:right top;">2672 (3,40 %)</div><div style="left:1121.56px;top:388px;font:30px/30px 'Liberation Sans',sans-serif;color:#1E1E1E;white-space:pre;transform:scaleX(0.9400);transform-origin:right top;">1410 (1,79 %)</div><div style="left:1336.50px;top:388px;font:30px/30px 'Liberation Sans',sans-serif;color:#1E1E1E;white-space:pre;transform:scaleX(1.0170);transform-origin:left top;">ntdll.dll</div><div style="left:0px;top:480.25px;width:1612.5px;height:3px;background:#ECEDF2;"></div><div style="left:748px;top:429.25px;width:2.5px;height:51px;background:#ECEDF2;"></div><div style="left:1036px;top:429.25px;width:2.5px;height:51px;background:#ECEDF2;"></div><div style="left:1322.5px;top:429.25px;width:2.5px;height:51px;background:#ECEDF2;"></div><div style="left:1610px;top:429.25px;width:2.5px;height:51px;background:#ECEDF2;"></div><div style="left:1014.26px;top:432.75px;width:10.744px;height:44px;background:#A8CADC;border-radius:6px;"></div><div style="left:1211.93px;top:432.75px;width:100.57px;height:44px;background:#A8CADC;border-radius:6px;"></div><div style="left:62.00px;top:442px;font:30px/30px 'Liberation Sans',sans-serif;color:#1E1E1E;white-space:pre;transform:scaleX(0.9620);transform-origin:left top;">RtlSleepConditionVariableCS</div><div style="left:834.56px;top:442px;font:30px/30px 'Liberation Sans',sans-serif;color:#1E1E1E;white-space:pre;transform:scaleX(0.9480);transform-origin:right top;">3108 (3,95 %)</div><div style="left:1121.56px;top:442px;font:30px/30px 'Liberation Sans',sans-serif;color:#1E1E1E;white-space:pre;transform:scaleX(0.9400);transform-origin:right top;">1398 (1,78 %)</div><div style="left:1336.50px;top:442px;font:30px/30px 'Liberation Sans',sans-serif;color:#1E1E1E;white-space:pre;transform:scaleX(1.0170);transform-origin:left top;">ntdll.dll</div><div style="left:0px;top:534.25px;width:1612.5px;height:3px;background:#ECEDF2;"></div><div style="left:748px;top:483.25px;width:2.5px;height:51px;background:#ECEDF2;"></div><div style="left:1036px;top:483.25px;width:2.5px;height:51px;background:#ECEDF2;"></div><div style="left:1322.5px;top:483.25px;width:2.5px;height:51px;background:#ECEDF2;"></div><div style="left:1610px;top:483.25px;width:2.5px;height:51px;background:#ECEDF2;"></div><div style="left:1019.5px;top:486.75px;width:5.5px;height:44px;background:#A8CADC;border-radius:6px;"></div><div style="left:1237.36px;top:486.75px;width:75.145px;height:44px;background:#A8CADC;border-radius:6px;"></div><div style="left:62.00px;top:496px;font:30px/30px 'Liberation Sans',sans-serif;color:#1E1E1E;white-space:pre;transform:scaleX(0.9620);transform-origin:left top;">page_dir_find_owner_slot</div><div style="left:834.56px;top:496px;font:30px/30px 'Liberation Sans',sans-serif;color:#1E1E1E;white-space:pre;transform:scaleX(0.9480);transform-origin:right top;">1046 (1,33 %)</div><div style="left:1121.56px;top:496px;font:30px/30px 'Liberation Sans',sans-serif;color:#1E1E1E;white-space:pre;transform:scaleX(0.9400);transform-origin:right top;">1046 (1,33 %)</div><div style="left:1336.50px;top:496px;font:30px/30px 'Liberation Sans',sans-serif;color:#1E1E1E;white-space:pre;transform:scaleX(0.9700);transform-origin:left top;">server.dll</div><div style="left:0px;top:588.25px;width:1612.5px;height:3px;background:#ECEDF2;"></div><div style="left:748px;top:537.25px;width:2.5px;height:51px;background:#ECEDF2;"></div><div style="left:1036px;top:537.25px;width:2.5px;height:51px;background:#ECEDF2;"></div><div style="left:1322.5px;top:537.25px;width:2.5px;height:51px;background:#ECEDF2;"></div><div style="left:1610px;top:537.25px;width:2.5px;height:51px;background:#ECEDF2;"></div><div style="left:1019.5px;top:540.75px;width:5.5px;height:44px;background:#A8CADC;border-radius:6px;"></div><div style="left:1239.05px;top:540.75px;width:73.45px;height:44px;background:#A8CADC;border-radius:6px;"></div><div style="left:62.00px;top:550px;font:30px/30px 'Liberation Sans',sans-serif;color:#1E1E1E;white-space:pre;transform:scaleX(0.9620);transform-origin:left top;">rec_get_offsets_func</div><div style="left:834.56px;top:550px;font:30px/30px 'Liberation Sans',sans-serif;color:#1E1E1E;white-space:pre;transform:scaleX(0.9480);transform-origin:right top;">1570 (2,00 %)</div><div style="left:1121.56px;top:550px;font:30px/30px 'Liberation Sans',sans-serif;color:#1E1E1E;white-space:pre;transform:scaleX(0.9400);transform-origin:right top;">1026 (1,30 %)</div><div style="left:1336.50px;top:550px;font:30px/30px 'Liberation Sans',sans-serif;color:#1E1E1E;white-space:pre;transform:scaleX(0.9700);transform-origin:left top;">server.dll</div><div style="left:0px;top:642.25px;width:1612.5px;height:3px;background:#ECEDF2;"></div><div style="left:748px;top:591.25px;width:2.5px;height:51px;background:#ECEDF2;"></div><div style="left:1036px;top:591.25px;width:2.5px;height:51px;background:#ECEDF2;"></div><div style="left:1322.5px;top:591.25px;width:2.5px;height:51px;background:#ECEDF2;"></div><div style="left:1610px;top:591.25px;width:2.5px;height:51px;background:#ECEDF2;"></div><div style="left:1005.96px;top:594.75px;width:19.04px;height:44px;background:#A8CADC;border-radius:6px;"></div><div style="left:1240.74px;top:594.75px;width:71.755px;height:44px;background:#A8CADC;border-radius:6px;"></div><div style="left:62.00px;top:604px;font:30px/30px 'Liberation Sans',sans-serif;color:#1E1E1E;white-space:pre;transform:scaleX(0.9620);transform-origin:left top;">RtlpAllocateHeapInternal</div><div style="left:834.56px;top:604px;font:30px/30px 'Liberation Sans',sans-serif;color:#1E1E1E;white-space:pre;transform:scaleX(0.9480);transform-origin:right top;">5506 (7,00 %)</div><div style="left:1138.25px;top:604px;font:30px/30px 'Liberation Sans',sans-serif;color:#1E1E1E;white-space:pre;transform:scaleX(0.9400);transform-origin:right top;">997 (1,27 %)</div><div style="left:1336.50px;top:604px;font:30px/30px 'Liberation Sans',sans-serif;color:#1E1E1E;white-space:pre;transform:scaleX(1.0170);transform-origin:left top;">ntdll.dll</div><div style="left:0px;top:696.25px;width:1612.5px;height:3px;background:#ECEDF2;"></div><div style="left:748px;top:645.25px;width:2.5px;height:51px;background:#ECEDF2;"></div><div style="left:1036px;top:645.25px;width:2.5px;height:51px;background:#ECEDF2;"></div><div style="left:1322.5px;top:645.25px;width:2.5px;height:51px;background:#ECEDF2;"></div><div style="left:1610px;top:645.25px;width:2.5px;height:51px;background:#ECEDF2;"></div><div style="left:1019.29px;top:648.75px;width:5.712px;height:44px;background:#A8CADC;border-radius:6px;"></div><div style="left:1245.83px;top:648.75px;width:66.67px;height:44px;background:#A8CADC;border-radius:6px;"></div><div style="left:62.00px;top:658px;font:30px/30px 'Liberation Sans',sans-serif;color:#1E1E1E;white-space:pre;transform:scaleX(0.9620);transform-origin:left top;">NtWaitForAlertByThreadId</div><div style="left:834.56px;top:658px;font:30px/30px 'Liberation Sans',sans-serif;color:#1E1E1E;white-space:pre;transform:scaleX(0.9480);transform-origin:right top;">1653 (2,10 %)</div><div style="left:1138.25px;top:658px;font:30px/30px 'Liberation Sans',sans-serif;color:#1E1E1E;white-space:pre;transform:scaleX(0.9400);transform-origin:right top;">929 (1,18 %)</div><div style="left:1336.50px;top:658px;font:30px/30px 'Liberation Sans',sans-serif;color:#1E1E1E;white-space:pre;transform:scaleX(1.0170);transform-origin:left top;">ntdll.dll</div><svg style="left:23px;top:17px;" width="18" height="17" viewBox="0 0 18 17"><path d="M18 0 V17 H0 Z" fill="#505050"/></svg></div><div style="left:3146px;top:382.5px;width:42px;height:673.5px;background:#E8E8EC;"></div><div style="left:3148px;top:400px;width:38px;height:37px;background:#C2C3C9;"></div><svg style="left:3153px;top:990px;" width="28" height="24" viewBox="0 0 28 24"><path d="M0 0 L14 14 L28 0 V9 L14 23 L0 9 Z" fill="#888B9C"/></svg><div style="left:99px;top:1066px;width:3087px;height:56px;background:#F7F8FE;"></div><div style="left:97px;top:1122px;width:3091px;height:2px;background:#4F5F92;"></div><div style="left:118.00px;top:1081px;font:30px/30px 'Liberation Sans',sans-serif;color:#1A6ECB;white-space:pre;transform:scaleX(1.0113);transform-origin:left top;">C:\work\10.5\storage\innobase\include\ut0new.h:343</div><div style="left:97px;top:1124px;width:3044px;height:703px;background:#FFFFFF;"></div><div style="left:97px;top:1124px;width:42px;height:703px;background:#E6E7EA;"></div><div style="left:139px;top:1124px;width:268px;height:703px;background:#F7F8FE;"></div><div style="left:3141px;top:1124px;width:47px;height:703px;background:#E8E8EC;"></div><svg style="left:3154px;top:1139px;" width="22" height="13" viewBox="0 0 22 13"><path d="M0 12.5 L11 0 L22 12.5 Z" fill="#868999"/></svg><div style="left:3151px;top:1369px;width:28px;height:20px;background:#C2C3C9;"></div><div style="left:3141px;top:1374px;width:47px;height:5px;background:#0000CD;"></div><svg style="left:3155px;top:1798px;" width="21" height="13" viewBox="0 0 21 13"><path d="M0 0 H21 L10.5 12.5 Z" fill="#868999"/></svg><div style="left:544px;top:1455px;width:2597px;height:42px;background:transparent;border:5px solid #E7E8EF;"></div><div style="left:97px;top:1124px;width:3044px;height:703px;overflow:hidden;"><div style="left:451px;top:331px;width:56px;height:42.5px;background:#FEF8F7;border:2.5px solid #F6B9B9;"></div><div style="left:451px;top:373.5px;width:470px;height:42.5px;background:#FEF8F7;border:2.5px solid #F6B9B9;"></div><div style="left:451px;top:543.5px;width:614px;height:42.5px;background:#FEF8F7;border:2.5px solid #F6B9B9;"></div><div style="left:346.50px;top:-2.5px;font:30px/30px 'Liberation Mono',monospace;color:#2B91AF;white-space:pre;">335</div><svg style="left:462.5px;top:4px;" width="15" height="14" viewBox="0 0 15 14"><path d="M0 7 H14 M8 1 L14 7 L8 13" fill="none" stroke="#2B91AF" stroke-width="1.9"/></svg><svg style="left:498.5px;top:4px;" width="15" height="14" viewBox="0 0 15 14"><path d="M0 7 H14 M8 1 L14 7 L8 13" fill="none" stroke="#2B91AF" stroke-width="1.9"/></svg><div style="left:524px;top:-2.5px;font:30px/30px 'Liberation Mono',monospace;white-space:pre;color:#000000;">const_pointer,</div><div style="left:346.50px;top:40px;font:30px/30px 'Liberation Mono',monospace;color:#2B91AF;white-space:pre;">336</div><svg style="left:462.5px;top:46.5px;" width="15" height="14" viewBox="0 0 15 14"><path d="M0 7 H14 M8 1 L14 7 L8 13" fill="none" stroke="#2B91AF" stroke-width="1.9"/></svg><svg style="left:498.5px;top:46.5px;" width="15" height="14" viewBox="0 0 15 14"><path d="M0 7 H14 M8 1 L14 7 L8 13" fill="none" stroke="#2B91AF" stroke-width="1.9"/></svg><div style="left:524px;top:40px;font:30px/30px 'Liberation Mono',monospace;white-space:pre;color:#0000FF;">const</div><div style="left:621px;top:52px;width:4px;height:4px;background:#2B91AF;border-radius:50%;"></div><div style="left:632px;top:40px;font:30px/30px 'Liberation Mono',monospace;white-space:pre;color:#0000FF;">char</div><div style="left:704px;top:40px;font:30px/30px 'Liberation Mono',monospace;white-space:pre;color:#000000;">*</div><div style="left:346.50px;top:82.5px;font:30px/30px 'Liberation Mono',monospace;color:#2B91AF;white-space:pre;">337</div><div style="left:452px;top:82.5px;font:30px/30px 'Liberation Mono',monospace;white-space:pre;color:#808080;">#ifdef</div><div style="left:567px;top:94.5px;width:4px;height:4px;background:#2B91AF;border-radius:50%;"></div><div style="left:578px;top:82.5px;font:30px/30px 'Liberation Mono',monospace;white-space:pre;color:#000000;">UNIV_PFS_MEMORY</div><div style="left:346.50px;top:125px;font:30px/30px 'Liberation Mono',monospace;color:#2B91AF;white-space:pre;">338</div><svg style="left:462.5px;top:131.5px;" width="15" height="14" viewBox="0 0 15 14"><path d="M0 7 H14 M8 1 L14 7 L8 13" fill="none" stroke="#2B91AF" stroke-width="1.9"/></svg><svg style="left:498.5px;top:131.5px;" width="15" height="14" viewBox="0 0 15 14"><path d="M0 7 H14 M8 1 L14 7 L8 13" fill="none" stroke="#2B91AF" stroke-width="1.9"/></svg><div style="left:524px;top:125px;font:30px/30px 'Liberation Mono',monospace;white-space:pre;color:#000000;">file</div><div style="left:603px;top:137px;width:4px;height:4px;background:#2B91AF;border-radius:50%;"></div><div style="left:614px;top:125px;font:30px/30px 'Liberation Mono',monospace;white-space:pre;color:#008000;">/*!&lt;</div><div style="left:693px;top:137px;width:4px;height:4px;background:#2B91AF;border-radius:50%;"></div><div style="left:704px;top:125px;font:30px/30px 'Liberation Mono',monospace;white-space:pre;color:#008000;">file</div><div style="left:783px;top:137px;width:4px;height:4px;background:#2B91AF;border-radius:50%;"></div><div style="left:794px;top:125px;font:30px/30px 'Liberation Mono',monospace;white-space:pre;color:#008000;">name</div><div style="left:873px;top:137px;width:4px;height:4px;background:#2B91AF;border-radius:50%;"></div><div style="left:884px;top:125px;font:30px/30px 'Liberation Mono',monospace;white-space:pre;color:#008000;">of</div><div style="left:927px;top:137px;width:4px;height:4px;background:#2B91AF;border-radius:50%;"></div><div style="left:938px;top:125px;font:30px/30px 'Liberation Mono',monospace;white-space:pre;color:#008000;">the</div><div style="left:999px;top:137px;width:4px;height:4px;background:#2B91AF;border-radius:50%;"></div><div style="left:1010px;top:125px;font:30px/30px 'Liberation Mono',monospace;white-space:pre;color:#008000;">caller</div><div style="left:1125px;top:137px;width:4px;height:4px;background:#2B91AF;border-radius:50%;"></div><div style="left:1136px;top:125px;font:30px/30px 'Liberation Mono',monospace;white-space:pre;color:#008000;">*/</div><div style="left:346.50px;top:167.5px;font:30px/30px 'Liberation Mono',monospace;color:#2B91AF;white-space:pre;">339</div><div style="left:452px;top:167.5px;font:30px/30px 'Liberation Mono',monospace;white-space:pre;color:#808080;">#endif</div><div style="left:346.50px;top:210px;font:30px/30px 'Liberation Mono',monospace;color:#2B91AF;white-space:pre;">340</div><svg style="left:462.5px;top:216.5px;" width="15" height="14" viewBox="0 0 15 14"><path d="M0 7 H14 M8 1 L14 7 L8 13" fill="none" stroke="#2B91AF" stroke-width="1.9"/></svg><svg style="left:498.5px;top:216.5px;" width="15" height="14" viewBox="0 0 15 14"><path d="M0 7 H14 M8 1 L14 7 L8 13" fill="none" stroke="#2B91AF" stroke-width="1.9"/></svg><div style="left:524px;top:210px;font:30px/30px 'Liberation Mono',monospace;white-space:pre;color:#000000;">,</div><div style="left:346.50px;top:252.5px;font:30px/30px 'Liberation Mono',monospace;color:#2B91AF;white-space:pre;">341</div><svg style="left:462.5px;top:259px;" width="15" height="14" viewBox="0 0 15 14"><path d="M0 7 H14 M8 1 L14 7 L8 13" fill="none" stroke="#2B91AF" stroke-width="1.9"/></svg><svg style="left:498.5px;top:259px;" width="15" height="14" viewBox="0 0 15 14"><path d="M0 7 H14 M8 1 L14 7 L8 13" fill="none" stroke="#2B91AF" stroke-width="1.9"/></svg><div style="left:524px;top:252.5px;font:30px/30px 'Liberation Mono',monospace;white-space:pre;color:#0000FF;">bool</div><svg style="left:606.5px;top:259px;" width="15" height="14" viewBox="0 0 15 14"><path d="M0 7 H14 M8 1 L14 7 L8 13" fill="none" stroke="#2B91AF" stroke-width="1.9"/></svg><svg style="left:642.5px;top:259px;" width="15" height="14" viewBox="0 0 15 14"><path d="M0 7 H14 M8 1 L14 7 L8 13" fill="none" stroke="#2B91AF" stroke-width="1.9"/></svg><div style="left:668px;top:252.5px;font:30px/30px 'Liberation Mono',monospace;white-space:pre;color:#000000;">set_to_zero</div><div style="left:873px;top:264.5px;width:4px;height:4px;background:#2B91AF;border-radius:50%;"></div><div style="left:884px;top:252.5px;font:30px/30px 'Liberation Mono',monospace;white-space:pre;color:#000000;">=</div><div style="left:909px;top:264.5px;width:4px;height:4px;background:#2B91AF;border-radius:50%;"></div><div style="left:920px;top:252.5px;font:30px/30px 'Liberation Mono',monospace;white-space:pre;color:#0000FF;">false</div><div style="left:1010px;top:252.5px;font:30px/30px 'Liberation Mono',monospace;white-space:pre;color:#000000;">,</div><div style="left:346.50px;top:295px;font:30px/30px 'Liberation Mono',monospace;color:#2B91AF;white-space:pre;">342</div><svg style="left:462.5px;top:301.5px;" width="15" height="14" viewBox="0 0 15 14"><path d="M0 7 H14 M8 1 L14 7 L8 13" fill="none" stroke="#2B91AF" stroke-width="1.9"/></svg><svg style="left:498.5px;top:301.5px;" width="15" height="14" viewBox="0 0 15 14"><path d="M0 7 H14 M8 1 L14 7 L8 13" fill="none" stroke="#2B91AF" stroke-width="1.9"/></svg><div style="left:524px;top:295px;font:30px/30px 'Liberation Mono',monospace;white-space:pre;color:#0000FF;">bool</div><svg style="left:606.5px;top:301.5px;" width="15" height="14" viewBox="0 0 15 14"><path d="M0 7 H14 M8 1 L14 7 L8 13" fill="none" stroke="#2B91AF" stroke-width="1.9"/></svg><svg style="left:642.5px;top:301.5px;" width="15" height="14" viewBox="0 0 15 14"><path d="M0 7 H14 M8 1 L14 7 L8 13" fill="none" stroke="#2B91AF" stroke-width="1.9"/></svg><div style="left:668px;top:295px;font:30px/30px 'Liberation Mono',monospace;white-space:pre;color:#000000;">throw_on_error</div><div style="left:927px;top:307px;width:4px;height:4px;background:#2B91AF;border-radius:50%;"></div><div style="left:938px;top:295px;font:30px/30px 'Liberation Mono',monospace;white-space:pre;color:#000000;">=</div><div style="left:963px;top:307px;width:4px;height:4px;background:#2B91AF;border-radius:50%;"></div><div style="left:974px;top:295px;font:30px/30px 'Liberation Mono',monospace;white-space:pre;color:#0000FF;">true</div><div style="left:1046px;top:295px;font:30px/30px 'Liberation Mono',monospace;white-space:pre;color:#000000;">)</div><div style="left:346.50px;top:337.5px;font:30px/30px 'Liberation Mono',monospace;color:#2B91AF;white-space:pre;">343</div><svg style="left:462.5px;top:344px;" width="15" height="14" viewBox="0 0 15 14"><path d="M0 7 H14 M8 1 L14 7 L8 13" fill="none" stroke="#2B91AF" stroke-width="1.9"/></svg><div style="left:488px;top:337.5px;font:30px/30px 'Liberation Mono',monospace;white-space:pre;color:#000000;">{</div><div style="left:346.50px;top:380px;font:30px/30px 'Liberation Mono',monospace;color:#2B91AF;white-space:pre;">344</div><svg style="left:462.5px;top:386.5px;" width="15" height="14" viewBox="0 0 15 14"><path d="M0 7 H14 M8 1 L14 7 L8 13" fill="none" stroke="#2B91AF" stroke-width="1.9"/></svg><svg style="left:498.5px;top:386.5px;" width="15" height="14" viewBox="0 0 15 14"><path d="M0 7 H14 M8 1 L14 7 L8 13" fill="none" stroke="#2B91AF" stroke-width="1.9"/></svg><div style="left:524px;top:380px;font:30px/30px 'Liberation Mono',monospace;white-space:pre;color:#8F08C4;">if</div><div style="left:567px;top:392px;width:4px;height:4px;background:#2B91AF;border-radius:50%;"></div><div style="left:578px;top:380px;font:30px/30px 'Liberation Mono',monospace;white-space:pre;color:#000000;">(n_elements</div><div style="left:783px;top:392px;width:4px;height:4px;background:#2B91AF;border-radius:50%;"></div><div style="left:794px;top:380px;font:30px/30px 'Liberation Mono',monospace;white-space:pre;color:#000000;">==</div><div style="left:837px;top:392px;width:4px;height:4px;background:#2B91AF;border-radius:50%;"></div><div style="left:848px;top:380px;font:30px/30px 'Liberation Mono',monospace;white-space:pre;color:#000000;">0)</div><div style="left:891px;top:392px;width:4px;height:4px;background:#2B91AF;border-radius:50%;"></div><div style="left:902px;top:380px;font:30px/30px 'Liberation Mono',monospace;white-space:pre;color:#000000;">{</div><div style="left:346.50px;top:422.5px;font:30px/30px 'Liberation Mono',monospace;color:#2B91AF;white-space:pre;">345</div><svg style="left:462.5px;top:429px;" width="15" height="14" viewBox="0 0 15 14"><path d="M0 7 H14 M8 1 L14 7 L8 13" fill="none" stroke="#2B91AF" stroke-width="1.9"/></svg><svg style="left:498.5px;top:429px;" width="15" height="14" viewBox="0 0 15 14"><path d="M0 7 H14 M8 1 L14 7 L8 13" fill="none" stroke="#2B91AF" stroke-width="1.9"/></svg><svg style="left:534.5px;top:429px;" width="15" height="14" viewBox="0 0 15 14"><path d="M0 7 H14 M8 1 L14 7 L8 13" fill="none" stroke="#2B91AF" stroke-width="1.9"/></svg><div style="left:560px;top:422.5px;font:30px/30px 'Liberation Mono',monospace;white-space:pre;color:#8F08C4;">return</div><div style="left:668px;top:422.5px;font:30px/30px 'Liberation Mono',monospace;white-space:pre;color:#000000;">(NULL);</div><div style="left:346.50px;top:465px;font:30px/30px 'Liberation Mono',monospace;color:#2B91AF;white-space:pre;">346</div><svg style="left:462.5px;top:471.5px;" width="15" height="14" viewBox="0 0 15 14"><path d="M0 7 H14 M8 1 L14 7 L8 13" fill="none" stroke="#2B91AF" stroke-width="1.9"/></svg><svg style="left:498.5px;top:471.5px;" width="15" height="14" viewBox="0 0 15 14"><path d="M0 7 H14 M8 1 L14 7 L8 13" fill="none" stroke="#2B91AF" stroke-width="1.9"/></svg><div style="left:524px;top:465px;font:30px/30px 'Liberation Mono',monospace;white-space:pre;color:#000000;">}</div><div style="left:346.50px;top:507.5px;font:30px/30px 'Liberation Mono',monospace;color:#2B91AF;white-space:pre;">347</div><div style="left:346.50px;top:550px;font:30px/30px 'Liberation Mono',monospace;color:#2B91AF;white-space:pre;">348</div><svg style="left:462.5px;top:556.5px;" width="15" height="14" viewBox="0 0 15 14"><path d="M0 7 H14 M8 1 L14 7 L8 13" fill="none" stroke="#2B91AF" stroke-width="1.9"/></svg><svg style="left:498.5px;top:556.5px;" width="15" height="14" viewBox="0 0 15 14"><path d="M0 7 H14 M8 1 L14 7 L8 13" fill="none" stroke="#2B91AF" stroke-width="1.9"/></svg><div style="left:524px;top:550px;font:30px/30px 'Liberation Mono',monospace;white-space:pre;color:#8F08C4;">if</div><div style="left:567px;top:562px;width:4px;height:4px;background:#2B91AF;border-radius:50%;"></div><div style="left:578px;top:550px;font:30px/30px 'Liberation Mono',monospace;white-space:pre;color:#000000;">(n_elements</div><div style="left:783px;top:562px;width:4px;height:4px;background:#2B91AF;border-radius:50%;"></div><div style="left:794px;top:550px;font:30px/30px 'Liberation Mono',monospace;white-space:pre;color:#000000;">&gt;</div><div style="left:819px;top:562px;width:4px;height:4px;background:#2B91AF;border-radius:50%;"></div><div style="left:830px;top:550px;font:30px/30px 'Liberation Mono',monospace;white-space:pre;color:#000000;">max_size())</div><div style="left:1035px;top:562px;width:4px;height:4px;background:#2B91AF;border-radius:50%;"></div><div style="left:1046px;top:550px;font:30px/30px 'Liberation Mono',monospace;white-space:pre;color:#000000;">{</div><div style="left:346.50px;top:592.5px;font:30px/30px 'Liberation Mono',monospace;color:#2B91AF;white-space:pre;">349</div><svg style="left:462.5px;top:599px;" width="15" height="14" viewBox="0 0 15 14"><path d="M0 7 H14 M8 1 L14 7 L8 13" fill="none" stroke="#2B91AF" stroke-width="1.9"/></svg><svg style="left:498.5px;top:599px;" width="15" height="14" viewBox="0 0 15 14"><path d="M0 7 H14 M8 1 L14 7 L8 13" fill="none" stroke="#2B91AF" stroke-width="1.9"/></svg><svg style="left:534.5px;top:599px;" width="15" height="14" viewBox="0 0 15 14"><path d="M0 7 H14 M8 1 L14 7 L8 13" fill="none" stroke="#2B91AF" stroke-width="1.9"/></svg><div style="left:560px;top:592.5px;font:30px/30px 'Liberation Mono',monospace;white-space:pre;color:#8F08C4;">if</div><div style="left:603px;top:604.5px;width:4px;height:4px;background:#2B91AF;border-radius:50%;"></div><div style="left:614px;top:592.5px;font:30px/30px 'Liberation Mono',monospace;white-space:pre;color:#000000;">(throw_on_error)</div><div style="left:909px;top:604.5px;width:4px;height:4px;background:#2B91AF;border-radius:50%;"></div><div style="left:920px;top:592.5px;font:30px/30px 'Liberation Mono',monospace;white-space:pre;color:#000000;">{</div><div style="left:346.50px;top:635px;font:30px/30px 'Liberation Mono',monospace;color:#2B91AF;white-space:pre;">350</div><svg style="left:462.5px;top:641.5px;" width="15" height="14" viewBox="0 0 15 14"><path d="M0 7 H14 M8 1 L14 7 L8 13" fill="none" stroke="#2B91AF" stroke-width="1.9"/></svg><svg style="left:498.5px;top:641.5px;" width="15" height="14" viewBox="0 0 15 14"><path d="M0 7 H14 M8 1 L14 7 L8 13" fill="none" stroke="#2B91AF" stroke-width="1.9"/></svg><svg style="left:534.5px;top:641.5px;" width="15" height="14" viewBox="0 0 15 14"><path d="M0 7 H14 M8 1 L14 7 L8 13" fill="none" stroke="#2B91AF" stroke-width="1.9"/></svg><svg style="left:570.5px;top:641.5px;" width="15" height="14" viewBox="0 0 15 14"><path d="M0 7 H14 M8 1 L14 7 L8 13" fill="none" stroke="#2B91AF" stroke-width="1.9"/></svg><div style="left:596px;top:635px;font:30px/30px 'Liberation Mono',monospace;white-space:pre;color:#8F08C4;">throw</div><div style="left:686px;top:635px;font:30px/30px 'Liberation Mono',monospace;white-space:pre;color:#000000;">(std::bad_alloc());</div><div style="left:346.50px;top:677.5px;font:30px/30px 'Liberation Mono',monospace;color:#2B91AF;white-space:pre;">351</div><svg style="left:462.5px;top:684px;" width="15" height="14" viewBox="0 0 15 14"><path d="M0 7 H14 M8 1 L14 7 L8 13" fill="none" stroke="#2B91AF" stroke-width="1.9"/></svg><svg style="left:498.5px;top:684px;" width="15" height="14" viewBox="0 0 15 14"><path d="M0 7 H14 M8 1 L14 7 L8 13" fill="none" stroke="#2B91AF" stroke-width="1.9"/></svg><svg style="left:534.5px;top:684px;" width="15" height="14" viewBox="0 0 15 14"><path d="M0 7 H14 M8 1 L14 7 L8 13" fill="none" stroke="#2B91AF" stroke-width="1.9"/></svg><div style="left:560px;top:677.5px;font:30px/30px 'Liberation Mono',monospace;white-space:pre;color:#000000;">}</div><div style="left:585px;top:689.5px;width:4px;height:4px;background:#2B91AF;border-radius:50%;"></div><div style="left:596px;top:677.5px;font:30px/30px 'Liberation Mono',monospace;white-space:pre;color:#8F08C4;">else</div><div style="left:675px;top:689.5px;width:4px;height:4px;background:#2B91AF;border-radius:50%;"></div><div style="left:686px;top:677.5px;font:30px/30px 'Liberation Mono',monospace;white-space:pre;color:#000000;">{</div><div style="left:91.00px;top:342.5px;font:30px/30px 'Liberation Mono',monospace;color:#000;white-space:pre;transform:scaleX(0.9722);transform-origin:right top;">165 (0,21 %)</div><div style="left:127.00px;top:385px;font:30px/30px 'Liberation Mono',monospace;color:#000;white-space:pre;transform:scaleX(0.9722);transform-origin:right top;">4 (0,01 %)</div><div style="left:127.00px;top:555px;font:30px/30px 'Liberation Mono',monospace;color:#000;white-space:pre;transform:scaleX(0.9722);transform-origin:right top;">9 (0,01 %)</div></div><div style="left:97px;top:1827px;width:3091px;height:43px;background:#E8E8EC;"></div><div style="left:97px;top:1827px;width:149px;height:43px;background:#FBFBFB;border:2px solid #C2CAE0;"></div><div style="left:104.00px;top:1834.5px;font:30px/30px 'Liberation Sans',sans-serif;color:#1E1E1E;white-space:pre;transform:scaleX(0.8464);transform-origin:left top;">100 %</div><svg style="left:224.5px;top:1845.5px;" width="15" height="8.5" viewBox="0 0 15 8.5"><path d="M0 0 H15 L7.5 8.5 Z" fill="#1E2A4A"/></svg><svg style="left:306px;top:1834px;" width="28" height="28" viewBox="0 0 28 28"><circle cx="14" cy="14" r="14" fill="#339933"/><path d="M7 14 L12 20 L21 7" fill="none" stroke="#fff" stroke-width="3.5"/></svg><div style="left:348.00px;top:1834.5px;font:30px/30px 'Liberation Sans',sans-serif;color:#1E1E1E;white-space:pre;transform:scaleX(0.9157);transform-origin:left top;">No issues found</div><svg style="left:747px;top:1838.5px;" width="13" height="21.5" viewBox="0 0 13 21.5"><path d="M13 0 V21.5 L0 10.75 Z" fill="#C6C7D0"/></svg><svg style="left:2679px;top:1837.5px;" width="12" height="22" viewBox="0 0 12 22"><path d="M0 0 V22 L12 11 Z" fill="#C6C7D0"/></svg><div style="left:2763.00px;top:1837px;font:30px/30px 'Liberation Sans',sans-serif;color:#1E1E1E;white-space:pre;transform:scaleX(0.8542);transform-origin:left top;">Ln: 343</div><div style="left:2897.00px;top:1837px;font:30px/30px 'Liberation Sans',sans-serif;color:#1E1E1E;white-space:pre;transform:scaleX(0.8159);transform-origin:left top;">Ch: 1</div><div style="left:3005.00px;top:1837px;font:30px/30px 'Liberation Sans',sans-serif;color:#1E1E1E;white-space:pre;transform:scaleX(0.8472);transform-origin:left top;">MIXED</div><div style="left:3137.00px;top:1837px;font:30px/30px 'Liberation Sans',sans-serif;color:#1E1E1E;white-space:pre;transform:scaleX(0.7282);transform-origin:left top;">LF</div><div style="left:97px;top:1889px;width:3091px;height:56px;background:#40568D;"></div><div style="left:108.00px;top:1904.5px;font:30px/30px 'Liberation Sans',sans-serif;color:#FFFFFF;white-space:pre;transform:scaleX(1.0217);transform-origin:left top;">Output</div><svg style="left:3061px;top:1913px;" width="20" height="10" viewBox="0 0 20 10"><path d="M0 0 H20 L10 10 Z" fill="#A7B4E0"/></svg><svg style="left:3106px;top:1904px;" width="18" height="28" viewBox="0 0 18 28"><path d="M4 1 H14 M5 1 V16 M13 1 V16 M1 17 H17 M9 17 V28" fill="none" stroke="#A7B4E0" stroke-width="3"/><rect x="5" y="1" width="4" height="16" fill="#A7B4E0"/></svg><svg style="left:3145px;top:1907px;" width="25" height="20" viewBox="0 0 25 20"><path d="M1 1 L24 19 M24 1 L1 19" stroke="#A7B4E0" stroke-width="3.2"/></svg><div style="left:97px;top:1945px;width:3091px;height:2.5px;background:#C2CCEB;"></div><div style="left:97px;top:1949.5px;width:205px;height:45.5px;background:#40568D;"></div><div style="left:109.50px;top:1958px;font:30px/30px 'Liberation Sans',sans-serif;color:#DDE3F5;white-space:pre;transform:scaleX(0.9554);transform-origin:left top;">Call Hierarchy</div><div style="left:307px;top:1949.5px;width:140px;height:45.5px;background:#40568D;"></div><div style="left:320.00px;top:1958px;font:30px/30px 'Liberation Sans',sans-serif;color:#DDE3F5;white-space:pre;transform:scaleX(0.9287);transform-origin:left top;">Error List</div><div style="left:575px;top:1949.5px;width:289px;height:45.5px;background:#40568D;"></div><div style="left:587.50px;top:1958px;font:30px/30px 'Liberation Sans',sans-serif;color:#DDE3F5;white-space:pre;transform:scaleX(0.9523);transform-origin:left top;">Find Symbol Results</div><div style="left:869px;top:1949.5px;width:420px;height:45.5px;background:#40568D;"></div><div style="left:881.00px;top:1958px;font:30px/30px 'Liberation Sans',sans-serif;color:#DDE3F5;white-space:pre;transform:scaleX(0.9817);transform-origin:left top;">&#x27;purge_task_group&#x27; references</div><div style="left:1294px;top:1949.5px;width:322px;height:45.5px;background:#40568D;"></div><div style="left:1307.00px;top:1958px;font:30px/30px 'Liberation Sans',sans-serif;color:#DDE3F5;white-space:pre;transform:scaleX(0.9459);transform-origin:left top;">Find srv_undo_sources</div><div style="left:451px;top:1947.5px;width:120px;height:50px;background:#F7F8FE;"></div><div style="left:463.00px;top:1958px;font:30px/30px 'Liberation Sans',sans-serif;color:#1E1E1E;white-space:pre;transform:scaleX(1.0439);transform-origin:left top;">Output</div><div style="left:3207px;top:196px;width:568px;height:56px;background:#40568D;"></div><div style="left:3217.50px;top:211px;font:30px/30px 'Liberation Sans',sans-serif;color:#FFFFFF;white-space:pre;transform:scaleX(0.9848);transform-origin:left top;">Solution Explorer</div><svg style="left:3648px;top:220.5px;" width="20" height="10" viewBox="0 0 20 10"><path d="M0 0 H20 L10 10 Z" fill="#A7B4E0"/></svg><svg style="left:3692.5px;top:211.5px;" width="18" height="28" viewBox="0 0 18 28"><path d="M4 1 H14 M5 1 V16 M13 1 V16 M1 17 H17 M9 17 V28" fill="none" stroke="#A7B4E0" stroke-width="3"/><rect x="5" y="1" width="4" height="16" fill="#A7B4E0"/></svg><svg style="left:3732.5px;top:214.5px;" width="25" height="20" viewBox="0 0 25 20"><path d="M1 1 L24 19 M24 1 L1 19" stroke="#A7B4E0" stroke-width="3.2"/></svg><div style="left:3207px;top:252px;width:568px;height:68px;background:#CCD5F0;"></div><svg style="left:3229px;top:270px;" width="30" height="30" viewBox="0 0 30 30"><circle cx="15" cy="15" r="15" fill="#A8AEC6"/><path d="M5 15 L13 7.5 V12 H22.5 V18 H13 V22.5 Z" fill="#D0D6EC"/></svg><svg style="left:3283px;top:270px;" width="30" height="30" viewBox="0 0 30 30"><circle cx="15" cy="15" r="15" fill="#A8AEC6"/><path d="M25 15 L17 7.5 V12 H7.5 V18 H17 V22.5 Z" fill="#D0D6EC"/></svg><svg style="left:3334px;top:268px;" width="36" height="36" viewBox="0 0 36 36"><path d="M3 18 L18 3 L33 18 M7 15 V34 H29 V15" fill="#D6D8EE" stroke="#333" stroke-width="3"/><rect x="15" y="23" width="6" height="11" fill="#333"/><rect x="26" y="3" width="3" height="9" fill="#333"/></svg><svg style="left:3389px;top:268px;" width="38" height="36" viewBox="0 0 38 36"><path d="M13 3 H18 L19.5 1 H35 V21 H13 Z" fill="#D8A95A"/><rect x="1.5" y="14.5" width="20" height="17" fill="#D6D8EE" stroke="#333" stroke-width="3"/><path d="M5 10 V4 H11 M8 1 L11 4 L8 7" fill="none" stroke="#00539C" stroke-width="2.6"/><path d="M33 24 V30 H26 M29 27 L26 30 L29 33" fill="none" stroke="#00539C" stroke-width="2.6"/></svg><svg style="left:3442px;top:283px;" width="15" height="8" viewBox="0 0 15 8"><path d="M0 0 H15 L7.5 8 Z" fill="#1E2A4A"/></svg><div style="left:3472px;top:262px;width:2.5px;height:48px;background:#98A6CF;"></div><svg style="left:3496px;top:268px;" width="36" height="36" viewBox="0 0 36 36"><path d="M1 1 H9 L5 7 Z" fill="#333"/><path d="M5 5 V10" stroke="#333" stroke-width="2.5"/><circle cx="20" cy="22" r="11" fill="#D6D8EE" stroke="#333" stroke-width="3"/><path d="M20 15 V23 H27" fill="none" stroke="#333" stroke-width="2.6"/></svg><svg style="left:3545.5px;top:283px;" width="15" height="8" viewBox="0 0 15 8"><path d="M0 0 H15 L7.5 8 Z" fill="#1E2A4A"/></svg><svg style="left:3580px;top:268px;" width="32" height="36" viewBox="0 0 32 36"><path d="M28 9 H4 M11 2 L4 9 L11 16 M4 26 H28 M21 19 L28 26 L21 33" fill="none" stroke="#A8AEC6" stroke-width="3"/></svg><svg style="left:3635px;top:268px;" width="30" height="34" viewBox="0 0 30 34"><path d="M9 10 V4 H28 V22 H22" fill="none" stroke="#333" stroke-width="2.6"/><rect x="2" y="11" width="19" height="19" fill="#D6D8EE" stroke="#333" stroke-width="2.6"/><rect x="7" y="20" width="9" height="2.6" fill="#00539C"/></svg><svg style="left:3685px;top:268px;" width="36" height="36" viewBox="0 0 36 36"><path d="M6 26 H2 V2 H20 L26 8 V12" fill="none" stroke="#333" stroke-width="2.6"/><path d="M10 12 H26 L34 20 V34 H10 Z" fill="#D6D8EE" stroke="#333" stroke-width="2.6"/><g fill="#333"><rect x="15" y="20" width="13" height="2.5"/><rect x="15" y="25" width="13" height="2.5"/></g></svg><svg style="left:3755px;top:262px;" width="18" height="10" viewBox="0 0 18 10"><path d="M0 0 L6 5 L0 10 Z M10 0 L16 5 L10 10 Z" fill="#1E1E1E"/></svg><div style="left:3207px;top:320px;width:568px;height:61px;background:#CCD5F0;"></div><div style="left:3207px;top:320px;width:567px;height:56px;background:#FCFCFC;border:2px solid #AAB2C8;border-right:none;"></div><div style="left:3220.00px;top:336px;font:30px/30px 'Liberation Sans',sans-serif;color:#6D6D6D;white-space:pre;transform:scaleX(0.9750);transform-origin:left top;">Search Solution Explorer (Ctrl+ü)</div><svg style="left:3705px;top:328px;" width="35" height="35" viewBox="0 0 35 35"><circle cx="22" cy="13" r="8.5" fill="none" stroke="#6D6D6D" stroke-width="4"/><path d="M16 19 L4 31" stroke="#6D6D6D" stroke-width="5" stroke-linecap="round"/></svg><svg style="left:3751.5px;top:343px;" width="15" height="9" viewBox="0 0 15 9"><path d="M0 0 H15 L7.5 9 Z" fill="#6D6D6D"/></svg><div style="left:3207px;top:381px;width:525px;height:1224px;background:#F7F8FE;"></div><div style="left:3732px;top:381px;width:43px;height:1224px;background:#E8E8EC;"></div><svg style="left:3742px;top:396px;" width="22" height="13" viewBox="0 0 22 13"><path d="M0 12.5 L11 0 L22 12.5 Z" fill="#868999"/></svg><div style="left:3742px;top:1497.5px;width:22px;height:64px;background:#C2C3C9;"></div><svg style="left:3742px;top:1576px;" width="22" height="13" viewBox="0 0 22 13"><path d="M0 0 H22 L11 12.5 Z" fill="#868999"/></svg><svg style="left:3233px;top:392.1px;" width="15" height="26" viewBox="0 0 15 26"><path d="M1.8 1.8 L13 13 L1.8 24.2 Z" fill="none" stroke="#1E1E1E" stroke-width="2.6"/></svg><svg style="left:3266.5px;top:400.1px;" width="13" height="13" viewBox="0 0 13 13"><circle cx="6.5" cy="6.5" r="6.2" fill="#E51400"/><rect x="3" y="5.2" width="7" height="2.6" fill="#fff"/></svg><svg style="left:3284.5px;top:390.6px;" width="35" height="30" viewBox="0 0 35 30"><rect x="1.2" y="1.2" width="32.6" height="27.6" fill="#EDEFFA" stroke="#91519E" stroke-width="2.4"/><g fill="#3A3A3A"><rect x="6" y="5.5" width="14" height="4.5"/><rect x="10.8" y="1.5" width="4.5" height="13"/><rect x="16" y="16" width="14" height="4.5"/><rect x="20.8" y="11.5" width="4.5" height="14"/></g></svg><div style="left:3335.60px;top:392.6px;font:30px/30px 'Liberation Sans',sans-serif;color:#1E1E1E;white-space:pre;transform:scaleX(1.0376);transform-origin:left top;">test-bt-fast</div><svg style="left:3233px;top:438.14px;" width="15" height="26" viewBox="0 0 15 26"><path d="M1.8 1.8 L13 13 L1.8 24.2 Z" fill="none" stroke="#1E1E1E" stroke-width="2.6"/></svg><svg style="left:3266.5px;top:446.14px;" width="13" height="13" viewBox="0 0 13 13"><circle cx="6.5" cy="6.5" r="6.2" fill="#E51400"/><rect x="3" y="5.2" width="7" height="2.6" fill="#fff"/></svg><svg style="left:3284.5px;top:436.64px;" width="35" height="30" viewBox="0 0 35 30"><rect x="1.2" y="1.2" width="32.6" height="27.6" fill="#EDEFFA" stroke="#91519E" stroke-width="2.4"/><g fill="#3A3A3A"><rect x="6" y="5.5" width="14" height="4.5"/><rect x="10.8" y="1.5" width="4.5" height="13"/><rect x="16" y="16" width="14" height="4.5"/><rect x="20.8" y="11.5" width="4.5" height="14"/></g></svg><div style="left:3335.60px;top:438.64px;font:30px/30px 'Liberation Sans',sans-serif;color:#1E1E1E;white-space:pre;transform:scaleX(1.0103);transform-origin:left top;">test-force</div><svg style="left:3233px;top:484.18px;" width="15" height="26" viewBox="0 0 15 26"><path d="M1.8 1.8 L13 13 L1.8 24.2 Z" fill="none" stroke="#1E1E1E" stroke-width="2.6"/></svg><svg style="left:3266.5px;top:492.18px;" width="13" height="13" viewBox="0 0 13 13"><circle cx="6.5" cy="6.5" r="6.2" fill="#E51400"/><rect x="3" y="5.2" width="7" height="2.6" fill="#fff"/></svg><svg style="left:3284.5px;top:482.68px;" width="35" height="30" viewBox="0 0 35 30"><rect x="1.2" y="1.2" width="32.6" height="27.6" fill="#EDEFFA" stroke="#91519E" stroke-width="2.4"/><g fill="#3A3A3A"><rect x="6" y="5.5" width="14" height="4.5"/><rect x="10.8" y="1.5" width="4.5" height="13"/><rect x="16" y="16" width="14" height="4.5"/><rect x="20.8" y="11.5" width="4.5" height="14"/></g></svg><div style="left:3335.60px;top:484.68px;font:30px/30px 'Liberation Sans',sans-serif;color:#1E1E1E;white-space:pre;transform:scaleX(0.9535);transform-origin:left top;">tests</div><svg style="left:3233px;top:530.22px;" width="15" height="26" viewBox="0 0 15 26"><path d="M1.8 1.8 L13 13 L1.8 24.2 Z" fill="none" stroke="#1E1E1E" stroke-width="2.6"/></svg><svg style="left:3266.5px;top:538.22px;" width="13" height="13" viewBox="0 0 13 13"><circle cx="6.5" cy="6.5" r="6.2" fill="#E51400"/><rect x="3" y="5.2" width="7" height="2.6" fill="#fff"/></svg><svg style="left:3284.5px;top:528.72px;" width="35" height="30" viewBox="0 0 35 30"><rect x="1.2" y="1.2" width="32.6" height="27.6" fill="#EDEFFA" stroke="#91519E" stroke-width="2.4"/><g fill="#3A3A3A"><rect x="6" y="5.5" width="14" height="4.5"/><rect x="10.8" y="1.5" width="4.5" height="13"/><rect x="16" y="16" width="14" height="4.5"/><rect x="20.8" y="11.5" width="4.5" height="14"/></g></svg><div style="left:3335.60px;top:530.72px;font:30px/30px 'Liberation Sans',sans-serif;color:#1E1E1E;white-space:pre;transform:scaleX(0.9681);transform-origin:left top;">thr_lock</div><svg style="left:3233px;top:576.26px;" width="15" height="26" viewBox="0 0 15 26"><path d="M1.8 1.8 L13 13 L1.8 24.2 Z" fill="none" stroke="#1E1E1E" stroke-width="2.6"/></svg><svg style="left:3266.5px;top:584.26px;" width="13" height="13" viewBox="0 0 13 13"><circle cx="6.5" cy="6.5" r="6.2" fill="#E51400"/><rect x="3" y="5.2" width="7" height="2.6" fill="#fff"/></svg><svg style="left:3284.5px;top:574.76px;" width="35" height="30" viewBox="0 0 35 30"><rect x="1.2" y="1.2" width="32.6" height="27.6" fill="#EDEFFA" stroke="#91519E" stroke-width="2.4"/><g fill="#3A3A3A"><rect x="6" y="5.5" width="14" height="4.5"/><rect x="10.8" y="1.5" width="4.5" height="13"/><rect x="16" y="16" width="14" height="4.5"/><rect x="20.8" y="11.5" width="4.5" height="14"/></g></svg><div style="left:3335.60px;top:576.76px;font:30px/30px 'Liberation Sans',sans-serif;color:#1E1E1E;white-space:pre;transform:scaleX(0.9861);transform-origin:left top;">thr_timer</div><svg style="left:3233px;top:622.3px;" width="15" height="26" viewBox="0 0 15 26"><path d="M1.8 1.8 L13 13 L1.8 24.2 Z" fill="none" stroke="#1E1E1E" stroke-width="2.6"/></svg><svg style="left:3266.5px;top:630.3px;" width="13" height="13" viewBox="0 0 13 13"><circle cx="6.5" cy="6.5" r="6.2" fill="#E51400"/><rect x="3" y="5.2" width="7" height="2.6" fill="#fff"/></svg><svg style="left:3284.5px;top:620.8px;" width="35" height="30" viewBox="0 0 35 30"><rect x="1.2" y="1.2" width="32.6" height="27.6" fill="#EDEFFA" stroke="#91519E" stroke-width="2.4"/><g fill="#3A3A3A"><rect x="6" y="5.5" width="14" height="4.5"/><rect x="10.8" y="1.5" width="4.5" height="13"/><rect x="16" y="16" width="14" height="4.5"/><rect x="20.8" y="11.5" width="4.5" height="14"/></g></svg><div style="left:3335.60px;top:622.8px;font:30px/30px 'Liberation Sans',sans-serif;color:#1E1E1E;white-space:pre;transform:scaleX(0.9875);transform-origin:left top;">thread</div><svg style="left:3233px;top:668.34px;" width="15" height="26" viewBox="0 0 15 26"><path d="M1.8 1.8 L13 13 L1.8 24.2 Z" fill="none" stroke="#1E1E1E" stroke-width="2.6"/></svg><svg style="left:3266.5px;top:676.34px;" width="13" height="13" viewBox="0 0 13 13"><circle cx="6.5" cy="6.5" r="6.2" fill="#E51400"/><rect x="3" y="5.2" width="7" height="2.6" fill="#fff"/></svg><svg style="left:3284.5px;top:666.84px;" width="35" height="30" viewBox="0 0 35 30"><rect x="1.2" y="1.2" width="32.6" height="27.6" fill="#EDEFFA" stroke="#91519E" stroke-width="2.4"/><g fill="#3A3A3A"><rect x="6" y="5.5" width="14" height="4.5"/><rect x="10.8" y="1.5" width="4.5" height="13"/><rect x="16" y="16" width="14" height="4.5"/><rect x="20.8" y="11.5" width="4.5" height="14"/></g></svg><div style="left:3335.60px;top:668.84px;font:30px/30px 'Liberation Sans',sans-serif;color:#1E1E1E;white-space:pre;transform:scaleX(0.9841);transform-origin:left top;">thread_pool_info</div><svg style="left:3233px;top:714.38px;" width="15" height="26" viewBox="0 0 15 26"><path d="M1.8 1.8 L13 13 L1.8 24.2 Z" fill="none" stroke="#1E1E1E" stroke-width="2.6"/></svg><svg style="left:3266.5px;top:722.38px;" width="13" height="13" viewBox="0 0 13 13"><circle cx="6.5" cy="6.5" r="6.2" fill="#E51400"/><rect x="3" y="5.2" width="7" height="2.6" fill="#fff"/></svg><svg style="left:3284.5px;top:712.88px;" width="35" height="30" viewBox="0 0 35 30"><rect x="1.2" y="1.2" width="32.6" height="27.6" fill="#EDEFFA" stroke="#91519E" stroke-width="2.4"/><g fill="#3A3A3A"><rect x="6" y="5.5" width="14" height="4.5"/><rect x="10.8" y="1.5" width="4.5" height="13"/><rect x="16" y="16" width="14" height="4.5"/><rect x="20.8" y="11.5" width="4.5" height="14"/></g></svg><div style="left:3335.60px;top:714.88px;font:30px/30px 'Liberation Sans',sans-serif;color:#1E1E1E;white-space:pre;transform:scaleX(1.1030);transform-origin:left top;">todo-t</div><div style="left:3207px;top:748.92px;width:525px;height:47.5px;background:#E7E7EF;"></div><svg style="left:3233px;top:760.42px;" width="15" height="26" viewBox="0 0 15 26"><path d="M1.8 1.8 L13 13 L1.8 24.2 Z" fill="none" stroke="#1E1E1E" stroke-width="2.6"/></svg><svg style="left:3266.5px;top:768.42px;" width="13" height="13" viewBox="0 0 13 13"><circle cx="6.5" cy="6.5" r="6.2" fill="#E51400"/><rect x="3" y="5.2" width="7" height="2.6" fill="#fff"/></svg><svg style="left:3284.5px;top:758.92px;" width="35" height="30" viewBox="0 0 35 30"><rect x="1.2" y="1.2" width="32.6" height="27.6" fill="#EDEFFA" stroke="#91519E" stroke-width="2.4"/><g fill="#3A3A3A"><rect x="6" y="5.5" width="14" height="4.5"/><rect x="10.8" y="1.5" width="4.5" height="13"/><rect x="16" y="16" width="14" height="4.5"/><rect x="20.8" y="11.5" width="4.5" height="14"/></g></svg><div style="left:3335.60px;top:760.92px;font:30px/30px 'Liberation Sans',sans-serif;color:#1E1E1E;white-space:pre;transform:scaleX(1.0682);transform-origin:left top;">tpool</div><svg style="left:3233px;top:806.46px;" width="15" height="26" viewBox="0 0 15 26"><path d="M1.8 1.8 L13 13 L1.8 24.2 Z" fill="none" stroke="#1E1E1E" stroke-width="2.6"/></svg><svg style="left:3266.5px;top:814.46px;" width="13" height="13" viewBox="0 0 13 13"><circle cx="6.5" cy="6.5" r="6.2" fill="#E51400"/><rect x="3" y="5.2" width="7" height="2.6" fill="#fff"/></svg><svg style="left:3284.5px;top:804.96px;" width="35" height="30" viewBox="0 0 35 30"><rect x="1.2" y="1.2" width="32.6" height="27.6" fill="#EDEFFA" stroke="#91519E" stroke-width="2.4"/><g fill="#3A3A3A"><rect x="6" y="5.5" width="14" height="4.5"/><rect x="10.8" y="1.5" width="4.5" height="13"/><rect x="16" y="16" width="14" height="4.5"/><rect x="20.8" y="11.5" width="4.5" height="14"/></g></svg><div style="left:3335.60px;top:806.96px;font:30px/30px 'Liberation Sans',sans-serif;color:#1E1E1E;white-space:pre;transform:scaleX(1.0370);transform-origin:left top;">trnman-t</div><svg style="left:3233px;top:852.5px;" width="15" height="26" viewBox="0 0 15 26"><path d="M1.8 1.8 L13 13 L1.8 24.2 Z" fill="none" stroke="#1E1E1E" stroke-width="2.6"/></svg><svg style="left:3266.5px;top:860.5px;" width="13" height="13" viewBox="0 0 13 13"><circle cx="6.5" cy="6.5" r="6.2" fill="#E51400"/><rect x="3" y="5.2" width="7" height="2.6" fill="#fff"/></svg><svg style="left:3284.5px;top:851px;" width="35" height="30" viewBox="0 0 35 30"><rect x="1.2" y="1.2" width="32.6" height="27.6" fill="#EDEFFA" stroke="#91519E" stroke-width="2.4"/><g fill="#3A3A3A"><rect x="6" y="5.5" width="14" height="4.5"/><rect x="10.8" y="1.5" width="4.5" height="13"/><rect x="16" y="16" width="14" height="4.5"/><rect x="20.8" y="11.5" width="4.5" height="14"/></g></svg><div style="left:3335.60px;top:853px;font:30px/30px 'Liberation Sans',sans-serif;color:#1E1E1E;white-space:pre;transform:scaleX(0.9937);transform-origin:left top;">type_geom</div><svg style="left:3233px;top:898.54px;" width="15" height="26" viewBox="0 0 15 26"><path d="M1.8 1.8 L13 13 L1.8 24.2 Z" fill="none" stroke="#1E1E1E" stroke-width="2.6"/></svg><svg style="left:3266.5px;top:906.54px;" width="13" height="13" viewBox="0 0 13 13"><circle cx="6.5" cy="6.5" r="6.2" fill="#E51400"/><rect x="3" y="5.2" width="7" height="2.6" fill="#fff"/></svg><svg style="left:3284.5px;top:897.04px;" width="35" height="30" viewBox="0 0 35 30"><rect x="1.2" y="1.2" width="32.6" height="27.6" fill="#EDEFFA" stroke="#91519E" stroke-width="2.4"/><g fill="#3A3A3A"><rect x="6" y="5.5" width="14" height="4.5"/><rect x="10.8" y="1.5" width="4.5" height="13"/><rect x="16" y="16" width="14" height="4.5"/><rect x="20.8" y="11.5" width="4.5" height="14"/></g></svg><div style="left:3335.60px;top:899.04px;font:30px/30px 'Liberation Sans',sans-serif;color:#1E1E1E;white-space:pre;transform:scaleX(0.9839);transform-origin:left top;">type_inet</div><svg style="left:3233px;top:944.58px;" width="15" height="26" viewBox="0 0 15 26"><path d="M1.8 1.8 L13 13 L1.8 24.2 Z" fill="none" stroke="#1E1E1E" stroke-width="2.6"/></svg><svg style="left:3266.5px;top:952.58px;" width="13" height="13" viewBox="0 0 13 13"><circle cx="6.5" cy="6.5" r="6.2" fill="#E51400"/><rect x="3" y="5.2" width="7" height="2.6" fill="#fff"/></svg><svg style="left:3284.5px;top:943.08px;" width="35" height="30" viewBox="0 0 35 30"><rect x="1.2" y="1.2" width="32.6" height="27.6" fill="#EDEFFA" stroke="#91519E" stroke-width="2.4"/><g fill="#3A3A3A"><rect x="6" y="5.5" width="14" height="4.5"/><rect x="10.8" y="1.5" width="4.5" height="13"/><rect x="16" y="16" width="14" height="4.5"/><rect x="20.8" y="11.5" width="4.5" height="14"/></g></svg><div style="left:3335.60px;top:945.08px;font:30px/30px 'Liberation Sans',sans-serif;color:#1E1E1E;white-space:pre;transform:scaleX(0.9800);transform-origin:left top;">type_test</div><svg style="left:3233px;top:990.62px;" width="15" height="26" viewBox="0 0 15 26"><path d="M1.8 1.8 L13 13 L1.8 24.2 Z" fill="none" stroke="#1E1E1E" stroke-width="2.6"/></svg><svg style="left:3266.5px;top:998.62px;" width="13" height="13" viewBox="0 0 13 13"><circle cx="6.5" cy="6.5" r="6.2" fill="#E51400"/><rect x="3" y="5.2" width="7" height="2.6" fill="#fff"/></svg><svg style="left:3284.5px;top:989.12px;" width="35" height="30" viewBox="0 0 35 30"><rect x="1.2" y="1.2" width="32.6" height="27.6" fill="#EDEFFA" stroke="#91519E" stroke-width="2.4"/><g fill="#3A3A3A"><rect x="6" y="5.5" width="14" height="4.5"/><rect x="10.8" y="1.5" width="4.5" height="13"/><rect x="16" y="16" width="14" height="4.5"/><rect x="20.8" y="11.5" width="4.5" height="14"/></g></svg><div style="left:3335.60px;top:991.12px;font:30px/30px 'Liberation Sans',sans-serif;color:#1E1E1E;white-space:pre;transform:scaleX(0.9663);transform-origin:left top;">udf_example</div><svg style="left:3233px;top:1036.66px;" width="15" height="26" viewBox="0 0 15 26"><path d="M1.8 1.8 L13 13 L1.8 24.2 Z" fill="none" stroke="#1E1E1E" stroke-width="2.6"/></svg><svg style="left:3266.5px;top:1044.66px;" width="13" height="13" viewBox="0 0 13 13"><circle cx="6.5" cy="6.5" r="6.2" fill="#E51400"/><rect x="3" y="5.2" width="7" height="2.6" fill="#fff"/></svg><svg style="left:3284.5px;top:1035.16px;" width="35" height="30" viewBox="0 0 35 30"><rect x="1.2" y="1.2" width="32.6" height="27.6" fill="#EDEFFA" stroke="#91519E" stroke-width="2.4"/><g fill="#3A3A3A"><rect x="6" y="5.5" width="14" height="4.5"/><rect x="10.8" y="1.5" width="4.5" height="13"/><rect x="16" y="16" width="14" height="4.5"/><rect x="20.8" y="11.5" width="4.5" height="14"/></g></svg><div style="left:3335.60px;top:1037.16px;font:30px/30px 'Liberation Sans',sans-serif;color:#1E1E1E;white-space:pre;transform:scaleX(0.9276);transform-origin:left top;">user_variables</div><svg style="left:3233px;top:1082.7px;" width="15" height="26" viewBox="0 0 15 26"><path d="M1.8 1.8 L13 13 L1.8 24.2 Z" fill="none" stroke="#1E1E1E" stroke-width="2.6"/></svg><svg style="left:3266.5px;top:1090.7px;" width="13" height="13" viewBox="0 0 13 13"><circle cx="6.5" cy="6.5" r="6.2" fill="#E51400"/><rect x="3" y="5.2" width="7" height="2.6" fill="#fff"/></svg><svg style="left:3284.5px;top:1081.2px;" width="35" height="30" viewBox="0 0 35 30"><rect x="1.2" y="1.2" width="32.6" height="27.6" fill="#EDEFFA" stroke="#91519E" stroke-width="2.4"/><g fill="#3A3A3A"><rect x="6" y="5.5" width="14" height="4.5"/><rect x="10.8" y="1.5" width="4.5" height="13"/><rect x="16" y="16" width="14" height="4.5"/><rect x="20.8" y="11.5" width="4.5" height="14"/></g></svg><div style="left:3335.60px;top:1083.2px;font:30px/30px 'Liberation Sans',sans-serif;color:#1E1E1E;white-space:pre;transform:scaleX(0.9672);transform-origin:left top;">userstat</div><svg style="left:3233px;top:1128.74px;" width="15" height="26" viewBox="0 0 15 26"><path d="M1.8 1.8 L13 13 L1.8 24.2 Z" fill="none" stroke="#1E1E1E" stroke-width="2.6"/></svg><svg style="left:3266.5px;top:1136.74px;" width="13" height="13" viewBox="0 0 13 13"><circle cx="6.5" cy="6.5" r="6.2" fill="#E51400"/><rect x="3" y="5.2" width="7" height="2.6" fill="#fff"/></svg><svg style="left:3284.5px;top:1127.24px;" width="35" height="30" viewBox="0 0 35 30"><rect x="1.2" y="1.2" width="32.6" height="27.6" fill="#EDEFFA" stroke="#91519E" stroke-width="2.4"/><g fill="#3A3A3A"><rect x="6" y="5.5" width="14" height="4.5"/><rect x="10.8" y="1.5" width="4.5" height="13"/><rect x="16" y="16" width="14" height="4.5"/><rect x="20.8" y="11.5" width="4.5" height="14"/></g></svg><div style="left:3335.60px;top:1129.24px;font:30px/30px 'Liberation Sans',sans-serif;color:#1E1E1E;white-space:pre;transform:scaleX(0.9645);transform-origin:left top;">view</div><svg style="left:3233px;top:1174.78px;" width="15" height="26" viewBox="0 0 15 26"><path d="M1.8 1.8 L13 13 L1.8 24.2 Z" fill="none" stroke="#1E1E1E" stroke-width="2.6"/></svg><svg style="left:3266.5px;top:1182.78px;" width="13" height="13" viewBox="0 0 13 13"><circle cx="6.5" cy="6.5" r="6.2" fill="#E51400"/><rect x="3" y="5.2" width="7" height="2.6" fill="#fff"/></svg><svg style="left:3284.5px;top:1173.28px;" width="35" height="30" viewBox="0 0 35 30"><rect x="1.2" y="1.2" width="32.6" height="27.6" fill="#EDEFFA" stroke="#91519E" stroke-width="2.4"/><g fill="#3A3A3A"><rect x="6" y="5.5" width="14" height="4.5"/><rect x="10.8" y="1.5" width="4.5" height="13"/><rect x="16" y="16" width="14" height="4.5"/><rect x="20.8" y="11.5" width="4.5" height="14"/></g></svg><div style="left:3335.60px;top:1175.28px;font:30px/30px 'Liberation Sans',sans-serif;color:#1E1E1E;white-space:pre;transform:scaleX(0.9854);transform-origin:left top;">vio</div><svg style="left:3233px;top:1220.82px;" width="15" height="26" viewBox="0 0 15 26"><path d="M1.8 1.8 L13 13 L1.8 24.2 Z" fill="none" stroke="#1E1E1E" stroke-width="2.6"/></svg><svg style="left:3266.5px;top:1228.82px;" width="13" height="13" viewBox="0 0 13 13"><circle cx="6.5" cy="6.5" r="6.2" fill="#E51400"/><rect x="3" y="5.2" width="7" height="2.6" fill="#fff"/></svg><svg style="left:3284.5px;top:1219.32px;" width="35" height="30" viewBox="0 0 35 30"><rect x="1.2" y="1.2" width="32.6" height="27.6" fill="#EDEFFA" stroke="#91519E" stroke-width="2.4"/><g fill="#3A3A3A"><rect x="6" y="5.5" width="14" height="4.5"/><rect x="10.8" y="1.5" width="4.5" height="13"/><rect x="16" y="16" width="14" height="4.5"/><rect x="20.8" y="11.5" width="4.5" height="14"/></g></svg><div style="left:3335.60px;top:1221.32px;font:30px/30px 'Liberation Sans',sans-serif;color:#1E1E1E;white-space:pre;transform:scaleX(0.9557);transform-origin:left top;">win_package</div><svg style="left:3233px;top:1266.86px;" width="15" height="26" viewBox="0 0 15 26"><path d="M1.8 1.8 L13 13 L1.8 24.2 Z" fill="none" stroke="#1E1E1E" stroke-width="2.6"/></svg><svg style="left:3266.5px;top:1274.86px;" width="13" height="13" viewBox="0 0 13 13"><circle cx="6.5" cy="6.5" r="6.2" fill="#E51400"/><rect x="3" y="5.2" width="7" height="2.6" fill="#fff"/></svg><svg style="left:3284.5px;top:1265.36px;" width="35" height="30" viewBox="0 0 35 30"><rect x="1.2" y="1.2" width="32.6" height="27.6" fill="#EDEFFA" stroke="#91519E" stroke-width="2.4"/><g fill="#3A3A3A"><rect x="6" y="5.5" width="14" height="4.5"/><rect x="10.8" y="1.5" width="4.5" height="13"/><rect x="16" y="16" width="14" height="4.5"/><rect x="20.8" y="11.5" width="4.5" height="14"/></g></svg><div style="left:3335.60px;top:1267.36px;font:30px/30px 'Liberation Sans',sans-serif;color:#1E1E1E;white-space:pre;transform:scaleX(0.9639);transform-origin:left top;">winservice</div><svg style="left:3233px;top:1312.9px;" width="15" height="26" viewBox="0 0 15 26"><path d="M1.8 1.8 L13 13 L1.8 24.2 Z" fill="none" stroke="#1E1E1E" stroke-width="2.6"/></svg><svg style="left:3266.5px;top:1320.9px;" width="13" height="13" viewBox="0 0 13 13"><circle cx="6.5" cy="6.5" r="6.2" fill="#E51400"/><rect x="3" y="5.2" width="7" height="2.6" fill="#fff"/></svg><svg style="left:3284.5px;top:1311.4px;" width="35" height="30" viewBox="0 0 35 30"><rect x="1.2" y="1.2" width="32.6" height="27.6" fill="#EDEFFA" stroke="#91519E" stroke-width="2.4"/><g fill="#3A3A3A"><rect x="6" y="5.5" width="14" height="4.5"/><rect x="10.8" y="1.5" width="4.5" height="13"/><rect x="16" y="16" width="14" height="4.5"/><rect x="20.8" y="11.5" width="4.5" height="14"/></g></svg><div style="left:3335.60px;top:1313.4px;font:30px/30px 'Liberation Sans',sans-serif;color:#1E1E1E;white-space:pre;transform:scaleX(0.9396);transform-origin:left top;">wixca</div><svg style="left:3233px;top:1358.94px;" width="15" height="26" viewBox="0 0 15 26"><path d="M1.8 1.8 L13 13 L1.8 24.2 Z" fill="none" stroke="#1E1E1E" stroke-width="2.6"/></svg><svg style="left:3266.5px;top:1366.94px;" width="13" height="13" viewBox="0 0 13 13"><circle cx="6.5" cy="6.5" r="6.2" fill="#E51400"/><rect x="3" y="5.2" width="7" height="2.6" fill="#fff"/></svg><svg style="left:3284.5px;top:1357.44px;" width="35" height="30" viewBox="0 0 35 30"><rect x="1.2" y="1.2" width="32.6" height="27.6" fill="#EDEFFA" stroke="#91519E" stroke-width="2.4"/><g fill="#3A3A3A"><rect x="6" y="5.5" width="14" height="4.5"/><rect x="10.8" y="1.5" width="4.5" height="13"/><rect x="16" y="16" width="14" height="4.5"/><rect x="20.8" y="11.5" width="4.5" height="14"/></g></svg><div style="left:3335.60px;top:1359.44px;font:30px/30px 'Liberation Sans',sans-serif;color:#1E1E1E;white-space:pre;transform:scaleX(1.0308);transform-origin:left top;">wolfcrypt</div><svg style="left:3233px;top:1404.98px;" width="15" height="26" viewBox="0 0 15 26"><path d="M1.8 1.8 L13 13 L1.8 24.2 Z" fill="none" stroke="#1E1E1E" stroke-width="2.6"/></svg><svg style="left:3266.5px;top:1412.98px;" width="13" height="13" viewBox="0 0 13 13"><circle cx="6.5" cy="6.5" r="6.2" fill="#E51400"/><rect x="3" y="5.2" width="7" height="2.6" fill="#fff"/></svg><svg style="left:3284.5px;top:1403.48px;" width="35" height="30" viewBox="0 0 35 30"><rect x="1.2" y="1.2" width="32.6" height="27.6" fill="#EDEFFA" stroke="#91519E" stroke-width="2.4"/><g fill="#3A3A3A"><rect x="6" y="5.5" width="14" height="4.5"/><rect x="10.8" y="1.5" width="4.5" height="13"/><rect x="16" y="16" width="14" height="4.5"/><rect x="20.8" y="11.5" width="4.5" height="14"/></g></svg><div style="left:3335.60px;top:1405.48px;font:30px/30px 'Liberation Sans',sans-serif;color:#1E1E1E;white-space:pre;transform:scaleX(0.9785);transform-origin:left top;">wolfssl</div><svg style="left:3233px;top:1451.02px;" width="15" height="26" viewBox="0 0 15 26"><path d="M1.8 1.8 L13 13 L1.8 24.2 Z" fill="none" stroke="#1E1E1E" stroke-width="2.6"/></svg><svg style="left:3266.5px;top:1459.02px;" width="13" height="13" viewBox="0 0 13 13"><circle cx="6.5" cy="6.5" r="6.2" fill="#E51400"/><rect x="3" y="5.2" width="7" height="2.6" fill="#fff"/></svg><svg style="left:3284.5px;top:1449.52px;" width="35" height="30" viewBox="0 0 35 30"><rect x="1.2" y="1.2" width="32.6" height="27.6" fill="#EDEFFA" stroke="#91519E" stroke-width="2.4"/><g fill="#3A3A3A"><rect x="6" y="5.5" width="14" height="4.5"/><rect x="10.8" y="1.5" width="4.5" height="13"/><rect x="16" y="16" width="14" height="4.5"/><rect x="20.8" y="11.5" width="4.5" height="14"/></g></svg><div style="left:3335.60px;top:1451.52px;font:30px/30px 'Liberation Sans',sans-serif;color:#1E1E1E;white-space:pre;transform:scaleX(0.9759);transform-origin:left top;">wsrep</div><svg style="left:3233px;top:1497.06px;" width="15" height="26" viewBox="0 0 15 26"><path d="M1.8 1.8 L13 13 L1.8 24.2 Z" fill="none" stroke="#1E1E1E" stroke-width="2.6"/></svg><svg style="left:3266.5px;top:1505.06px;" width="13" height="13" viewBox="0 0 13 13"><circle cx="6.5" cy="6.5" r="6.2" fill="#E51400"/><rect x="3" y="5.2" width="7" height="2.6" fill="#fff"/></svg><svg style="left:3284.5px;top:1495.56px;" width="35" height="30" viewBox="0 0 35 30"><rect x="1.2" y="1.2" width="32.6" height="27.6" fill="#EDEFFA" stroke="#91519E" stroke-width="2.4"/><g fill="#3A3A3A"><rect x="6" y="5.5" width="14" height="4.5"/><rect x="10.8" y="1.5" width="4.5" height="13"/><rect x="16" y="16" width="14" height="4.5"/><rect x="20.8" y="11.5" width="4.5" height="14"/></g></svg><div style="left:3335.60px;top:1497.56px;font:30px/30px 'Liberation Sans',sans-serif;color:#1E1E1E;white-space:pre;transform:scaleX(0.8514);transform-origin:left top;">ZERO_CHECK</div><svg style="left:3233px;top:1543.1px;" width="15" height="26" viewBox="0 0 15 26"><path d="M1.8 1.8 L13 13 L1.8 24.2 Z" fill="none" stroke="#1E1E1E" stroke-width="2.6"/></svg><svg style="left:3266.5px;top:1551.1px;" width="13" height="13" viewBox="0 0 13 13"><circle cx="6.5" cy="6.5" r="6.2" fill="#E51400"/><rect x="3" y="5.2" width="7" height="2.6" fill="#fff"/></svg><svg style="left:3284.5px;top:1541.6px;" width="35" height="30" viewBox="0 0 35 30"><rect x="1.2" y="1.2" width="32.6" height="27.6" fill="#EDEFFA" stroke="#91519E" stroke-width="2.4"/><g fill="#3A3A3A"><rect x="6" y="5.5" width="14" height="4.5"/><rect x="10.8" y="1.5" width="4.5" height="13"/><rect x="16" y="16" width="14" height="4.5"/><rect x="20.8" y="11.5" width="4.5" height="14"/></g></svg><div style="left:3335.60px;top:1543.6px;font:30px/30px 'Liberation Sans',sans-serif;color:#1E1E1E;white-space:pre;transform:scaleX(0.9838);transform-origin:left top;">zlib</div><div style="left:3207px;top:1605px;width:251px;height:50.5px;background:#F7F8FE;"></div><div style="left:3220.00px;top:1618px;font:30px/30px 'Liberation Sans',sans-serif;color:#1E1E1E;white-space:pre;transform:scaleX(0.9848);transform-origin:left top;">Solution Explorer</div><div style="left:3462px;top:1607px;width:211px;height:45.5px;background:#40568D;"></div><div style="left:3475.00px;top:1618px;font:30px/30px 'Liberation Sans',sans-serif;color:#DDE3F5;white-space:pre;transform:scaleX(0.9565);transform-origin:left top;">Team Explorer</div><div style="left:3207px;top:1675px;width:568px;height:55px;background:#40568D;"></div><div style="left:3219.40px;top:1690px;font:30px/30px 'Liberation Sans',sans-serif;color:#FFFFFF;white-space:pre;transform:scaleX(0.9727);transform-origin:left top;">Properties</div><svg style="left:3648px;top:1699px;" width="20" height="10" viewBox="0 0 20 10"><path d="M0 0 H20 L10 10 Z" fill="#A7B4E0"/></svg><svg style="left:3692.5px;top:1690px;" width="18" height="28" viewBox="0 0 18 28"><path d="M4 1 H14 M5 1 V16 M13 1 V16 M1 17 H17 M9 17 V28" fill="none" stroke="#A7B4E0" stroke-width="3"/><rect x="5" y="1" width="4" height="16" fill="#A7B4E0"/></svg><svg style="left:3732.5px;top:1693px;" width="25" height="20" viewBox="0 0 25 20"><path d="M1 1 L24 19 M24 1 L1 19" stroke="#A7B4E0" stroke-width="3.2"/></svg><div style="left:3207px;top:1730px;width:568px;height:49.5px;background:#FAFAFA;"></div><svg style="left:3730.5px;top:1752px;" width="14" height="8" viewBox="0 0 14 8"><path d="M0 0 H14 L7.0 8 Z" fill="#1E2A4A"/></svg><div style="left:3207px;top:1779.5px;width:568px;height:62px;background:#CCD5F0;"></div><div style="left:3210px;top:1782px;width:58px;height:55px;background:#FCE5B4;border:1.5px solid #E5C365;"></div><svg style="left:3220px;top:1791px;" width="38" height="38" viewBox="0 0 38 38"><g fill="#333"><rect x="2" y="2" width="10" height="10"/><rect x="2" y="22" width="10" height="10"/><rect x="15" y="3" width="20" height="2.5"/><rect x="15" y="8" width="20" height="2.5"/><rect x="15" y="14" width="20" height="2.5"/><rect x="15" y="23" width="20" height="2.5"/><rect x="15" y="28" width="20" height="2.5"/><rect x="15" y="33" width="10" height="2.5"/></g><g fill="#fff"><rect x="6" y="4" width="2" height="6"/><rect x="4" y="6" width="6" height="2"/><rect x="6" y="24" width="2" height="6"/><rect x="4" y="26" width="6" height="2"/></g></svg><svg style="left:3276px;top:1788px;" width="44" height="44" viewBox="0 0 44 44"><rect x="2" y="2" width="21" height="20" fill="#333"/><path d="M5.5 19 L12.5 4 L19.5 19 M8 13.5 H17" fill="none" stroke="#D6D8EE" stroke-width="3.2"/><path d="M4 24.5 H20 L5 38 H21" fill="none" stroke="#333" stroke-width="4.5"/><path d="M32 9 V36 M25 28.5 L32 36 L39 28.5" fill="none" stroke="#00539C" stroke-width="4.5"/></svg><div style="left:3328px;top:1782px;width:2px;height:55px;background:#98A6CF;"></div><svg style="left:3341px;top:1789px;" width="40" height="40" viewBox="0 0 40 40"><path d="M6 34 L22 18" stroke="#9A9DA8" stroke-width="7" stroke-linecap="round"/><circle cx="27" cy="13" r="10" fill="#9A9DA8"/><path d="M27 13 L34 6" stroke="#CCD5F0" stroke-width="5"/></svg><div style="left:3207px;top:1841.5px;width:568px;height:156px;background:#F7F8FE;"></div><div style="left:3207px;top:1860px;width:568px;height:1.5px;background:#E3E5EE;"></div><div style="left:3841px;top:194px;width:15px;height:167px;background:#3D4F82;"></div><div style="left:3841px;top:391px;width:15px;height:217px;background:#3D4F82;"></div><div style="left:3795px;top:195.5px;width:163.4px;height:30px;font:30px/30px 'Liberation Sans',sans-serif;color:#FFFFFF;white-space:pre;transform-origin:0 0;transform:translate(30px,0) rotate(90deg) scaleX(1.0035);">Notifications</div><div style="left:3795px;top:393px;width:217.9px;height:30px;font:30px/30px 'Liberation Sans',sans-serif;color:#FFFFFF;white-space:pre;transform-origin:0 0;transform:translate(30px,0) rotate(90deg) scaleX(0.9820);">Diagnostic Tools</div><div style="left:16px;top:2015px;width:3840px;height:61px;background:#3F4F8A;"></div><svg style="left:25px;top:2031px;" width="42" height="30" viewBox="0 0 42 30"><path d="M8 2 H40 L34 28 H2 Z" fill="none" stroke="#fff" stroke-width="2.8"/></svg><div style="left:87.50px;top:2032px;font:30px/30px 'Liberation Sans',sans-serif;color:#FFFFFF;white-space:pre;transform:scaleX(0.9108);transform-origin:left top;">Ready</div><svg style="left:3132px;top:2033px;" width="22" height="27" viewBox="0 0 22 27"><path d="M11 0 L22 12 H15 V27 H7 V12 H0 Z" fill="#D3D3D5"/></svg><div style="left:3178.50px;top:2032px;font:30px/30px 'Liberation Sans',sans-serif;color:#FFFFFF;white-space:pre;">0</div><svg style="left:3255px;top:2029px;" width="30" height="30" viewBox="0 0 30 30"><g transform="rotate(-45 15 15)"><rect x="9" y="10.5" width="17" height="9" fill="#D3D3D5"/><rect x="27.5" y="10.5" width="5" height="9" fill="#D3D3D5"/><path d="M9 10.5 L1 15 L9 19.5 Z" fill="#D3D3D5"/></g></svg><div style="left:3305.00px;top:2032px;font:30px/30px 'Liberation Sans',sans-serif;color:#FFFFFF;white-space:pre;">5</div><svg style="left:3376px;top:2027px;" width="37" height="37" viewBox="0 0 37 37"><path d="M18.5 1 L36 18.5 L18.5 36 L1 18.5 Z" fill="#D3D3D5"/><path d="M12 8 L18 14 V26 M18 14 L25 21" stroke="#3F4F8A" stroke-width="2.5" fill="none"/><circle cx="18" cy="27" r="2.5" fill="#3F4F8A"/><circle cx="25.5" cy="21.5" r="2.5" fill="#3F4F8A"/><circle cx="18" cy="14" r="2.5" fill="#3F4F8A"/></svg><div style="left:3432.00px;top:2032px;font:30px/30px 'Liberation Sans',sans-serif;color:#FFFFFF;white-space:pre;transform:scaleX(0.8820);transform-origin:left top;">10.5</div><svg style="left:3541px;top:2028px;" width="38" height="36" viewBox="0 0 38 36"><path d="M19 36 V20 L5 6 M19 20 L33 6" fill="none" stroke="#D3D3D5" stroke-width="5"/><path d="M1 2 H12 V13 Z M37 2 H26 V13 Z" fill="#D3D3D5"/></svg><div style="left:3597.00px;top:2032px;font:30px/30px 'Liberation Sans',sans-serif;color:#FFFFFF;white-space:pre;transform:scaleX(0.8734);transform-origin:left top;">10.5</div><svg style="left:3665px;top:2041px;" width="19" height="9" viewBox="0 0 19 9"><path d="M0 9 L9.5 0 L19 9 Z" fill="#fff"/></svg><svg style="left:3748px;top:2026px;" width="34" height="36" viewBox="0 0 34 36"><path d="M4 26 C8 22 8 16 8 12 C8 6 12 2 17 2 C22 2 26 6 26 12 C26 16 26 22 30 26 Z" fill="#D3D3D5"/><circle cx="17" cy="30" r="4" fill="#D3D3D5"/></svg><div style="left:3771px;top:2035px;width:40px;height:40px;border-radius:50%;background:#E51400;"></div><div style="left:3777.00px;top:2042px;font:30px/30px 'Liberation Sans',sans-serif;color:#FFFFFF;white-space:pre;transform:scaleX(0.8689);transform-origin:left top;">14</div><div style="left:16px;top:2076px;width:3840px;height:16px;background:#243338;"></div><div style="left:136px;top:2076px;width:858px;height:16px;background:#F0F0F0;border-top:2px solid #BDBDBD;border-left:2px solid #BDBDBD;border-right:2px solid #BDBDBD;"></div><div style="left:2855px;top:2076px;width:121px;height:16px;background:#4A4C4E;"></div><div style="left:3844px;top:2078px;width:2px;height:14px;background:#8A8A8A;"></div>
</body></html>
